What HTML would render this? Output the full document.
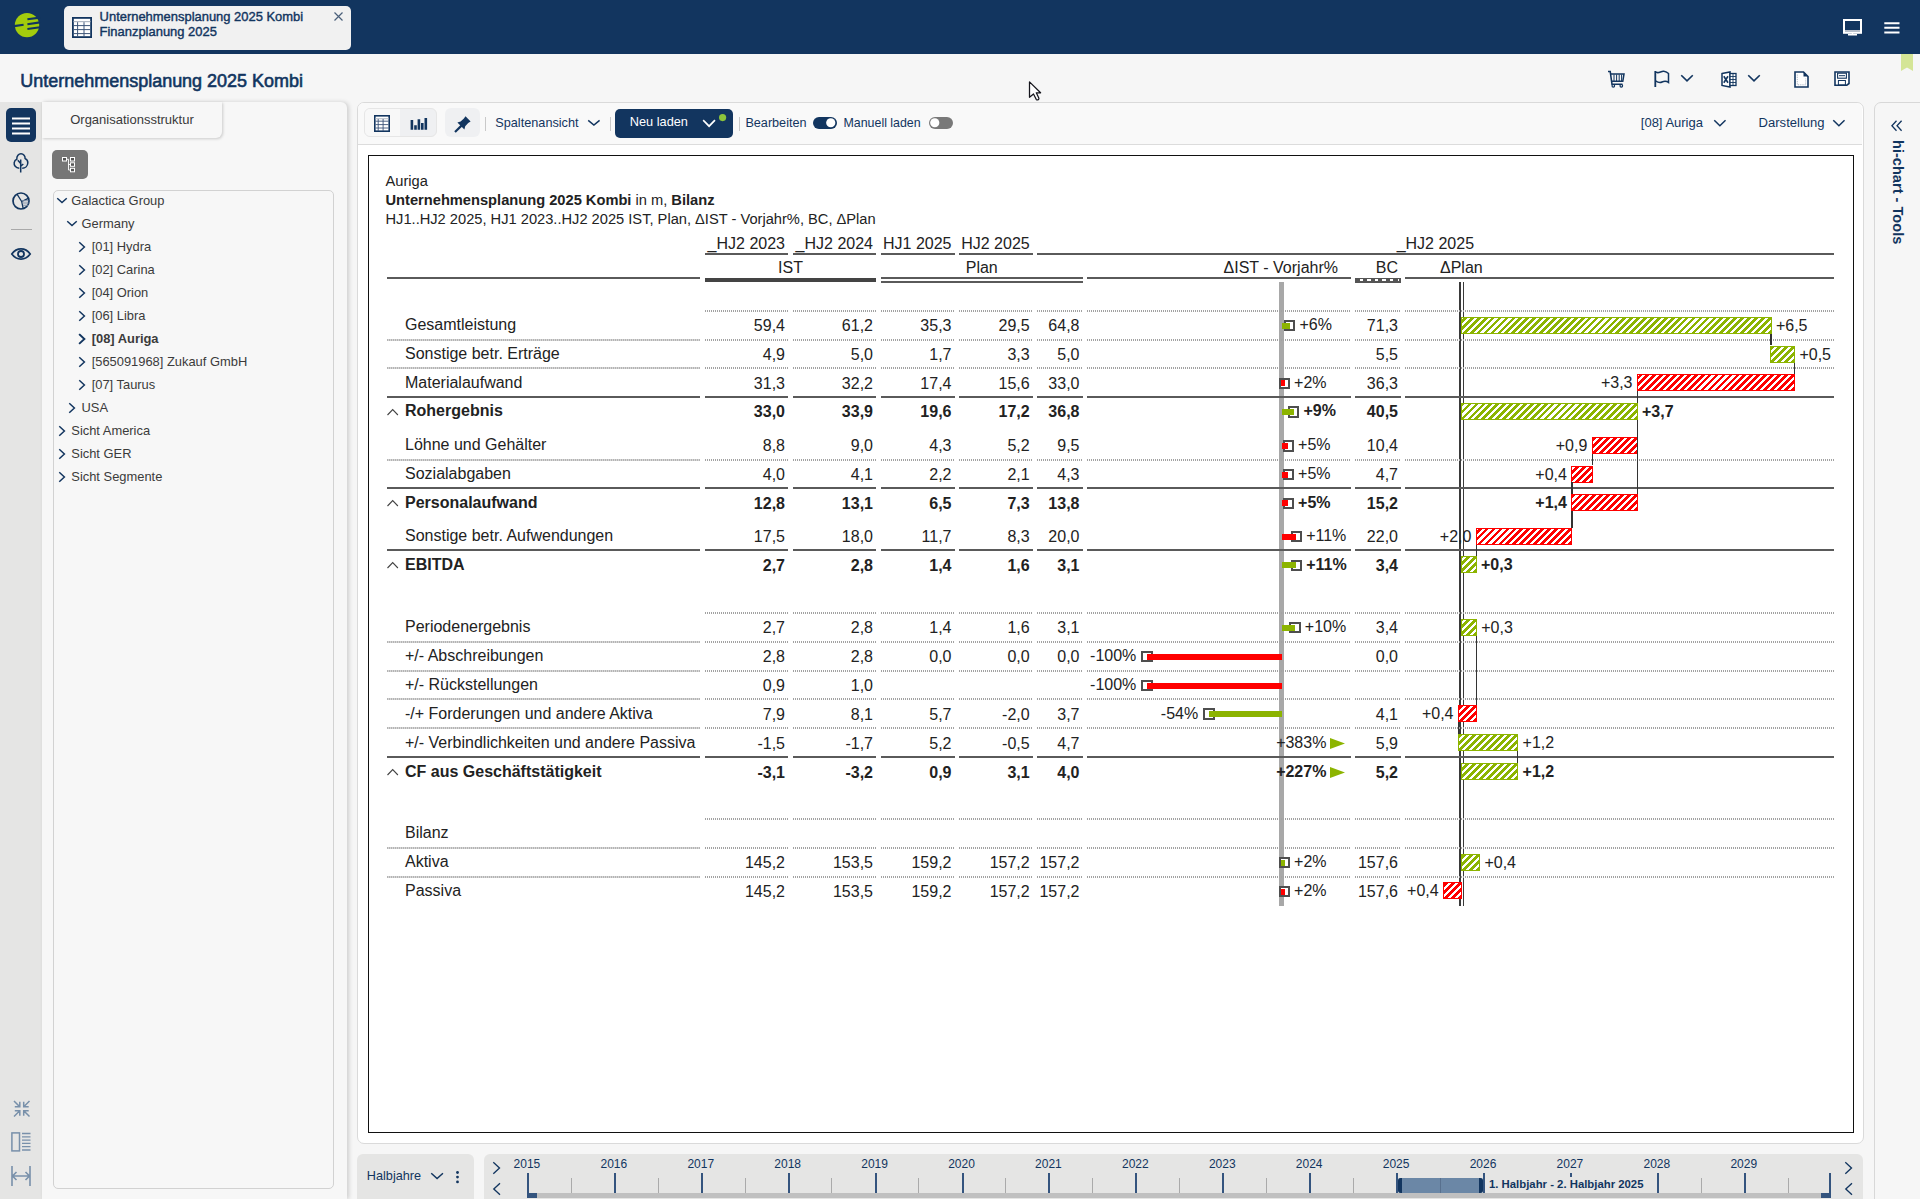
<!DOCTYPE html><html><head><meta charset="utf-8"><style>
*{margin:0;padding:0;box-sizing:border-box}
html,body{width:1920px;height:1199px;overflow:hidden;background:#f6f6f6;font-family:'Liberation Sans', sans-serif;position:relative}
svg{position:absolute;overflow:visible}
</style></head><body>
<div style="position:absolute;left:0px;top:0px;width:1920px;height:54px;background:#12355f;"></div>
<svg style="left:14px;top:12px;" width="26" height="26" viewBox="0 0 26 26"><circle cx="13" cy="13.1" r="12.2" fill="#a3cc0c"/><path d="M13.4 7.3 L26 5.6 M13.4 12.3 L26 10.4 M13.4 17.0 L26 15.2 M0 14.1 L9.6 12.8" stroke="#12355f" stroke-width="2.1" fill="none"/></svg>
<div style="position:absolute;left:64px;top:6px;width:287px;height:44px;background:#f1f1f1;border-radius:5px;"></div>
<svg style="left:72px;top:17px;" width="20" height="21" viewBox="0 0 20 21"><rect x="0.9" y="0.9" width="18.2" height="19.2" fill="#fff" stroke="#12355f" stroke-width="1.8"/><path d="M1.5 4.6 H18.5" stroke="#b0b8c4" stroke-width="1.2"/><path d="M1.5 8.6 H18.5 M1.5 12.6 H18.5 M1.5 16.6 H18.5 M5.6 5.2 V19.5 M12 5.2 V19.5" stroke="#3c5478" stroke-width="1"/></svg>
<div style="position:absolute;top:10.94px;font-size:12.95px;line-height:12.95px;font-weight:400;color:#12355f;white-space:nowrap;font-family:'Liberation Sans', sans-serif;-webkit-text-stroke:0.4px #12355f;left:99.6px;">Unternehmensplanung 2025 Kombi</div>
<div style="position:absolute;top:25.74px;font-size:12.95px;line-height:12.95px;font-weight:400;color:#12355f;white-space:nowrap;font-family:'Liberation Sans', sans-serif;-webkit-text-stroke:0.4px #12355f;left:99.6px;">Finanzplanung 2025</div>
<svg style="left:334px;top:11.5px;" width="9" height="9" viewBox="0 0 9 9"><path d="M0.5 0.5 L8.5 8.5 M8.5 0.5 L0.5 8.5" stroke="#4a5f7a" stroke-width="1.2"/></svg>
<svg style="left:1843px;top:19px;" width="19" height="17" viewBox="0 0 19 17"><rect x="1" y="1" width="17" height="12.8" fill="none" stroke="#fff" stroke-width="2"/><rect x="2" y="11" width="15" height="2" fill="#b8c0cc"/><path d="M9.5 13.8 V15.5 M5 15.8 H14" stroke="#fff" stroke-width="1.4"/></svg>
<svg style="left:1884px;top:21.5px;" width="16" height="12" viewBox="0 0 16 12"><path d="M0.3 1.3 H15.5 M0.3 5.7 H15.5 M0.3 10.4 H15.5" stroke="#fff" stroke-width="2"/></svg>
<div style="position:absolute;top:72.28px;font-size:17.98px;line-height:17.98px;font-weight:400;color:#12355f;white-space:nowrap;font-family:'Liberation Sans', sans-serif;-webkit-text-stroke:0.6px #12355f;left:20.3px;">Unternehmensplanung 2025 Kombi</div>
<svg style="left:1607px;top:70px;" width="18" height="18" viewBox="0 0 18 18"><path d="M1 1.5 H3.2 L5 14.3 H15.5" fill="none" stroke="#12355f" stroke-width="1.6"/><path d="M3.8 4 H17 L15.8 11.3 H4.8" fill="none" stroke="#12355f" stroke-width="1.5"/><path d="M7 4.5 V11 M9.6 4.5 V11 M12.2 4.5 V11 M14.6 4.5 V11" stroke="#12355f" stroke-width="1"/><circle cx="6.3" cy="15.8" r="1.3" fill="none" stroke="#12355f" stroke-width="1.2"/><circle cx="14.3" cy="15.8" r="1.3" fill="none" stroke="#12355f" stroke-width="1.2"/></svg>
<svg style="left:1654px;top:70px;" width="16" height="18" viewBox="0 0 16 18"><path d="M1.3 1 V17" stroke="#12355f" stroke-width="1.8"/><path d="M1.5 1.8 C4.5 4.5 7 0.5 10 1.2 C12 1.6 13.5 2.5 14.5 3.5 V12.5 C12 10.5 10 11 8 12 C6 13 4 12.5 1.5 10.8" fill="none" stroke="#12355f" stroke-width="1.5"/></svg>
<svg style="left:1681px;top:75.3px;" width="12" height="6.6" viewBox="0 0 12 6.6"><path d="M0.8 0.8 L6.0 5.8 L11.2 0.8" fill="none" stroke="#12355f" stroke-width="1.6" stroke-linecap="square" stroke-linejoin="miter"/></svg>
<svg style="left:1721px;top:70.5px;" width="16" height="17" viewBox="0 0 16 17"><path d="M1 2.5 L9 1 V16 L1 14.5 Z" fill="#fff" stroke="#12355f" stroke-width="1.5"/><rect x="9" y="2.5" width="6" height="12" fill="#fff" stroke="#12355f" stroke-width="1.3"/><path d="M9 5.5 H15 M9 8.5 H15 M9 11.5 H15 M12 2.5 V14.5" stroke="#12355f" stroke-width="0.9"/><path d="M2.8 5.3 L7 11.8 M7 5.3 L2.8 11.8" stroke="#12355f" stroke-width="1.6"/></svg>
<svg style="left:1748px;top:75.3px;" width="12" height="6.6" viewBox="0 0 12 6.6"><path d="M0.8 0.8 L6.0 5.8 L11.2 0.8" fill="none" stroke="#12355f" stroke-width="1.6" stroke-linecap="square" stroke-linejoin="miter"/></svg>
<svg style="left:1794px;top:70.5px;" width="15" height="17" viewBox="0 0 15 17"><path d="M1 1 H9.5 L14 5.5 V16 H1 Z" fill="#fff" stroke="#12355f" stroke-width="1.6"/><path d="M9.5 1 V5.5 H14 Z" fill="#12355f"/><path d="M3.3 3.5 V13.8 H11.7 V7.5" fill="none" stroke="#9aa6b6" stroke-width="0.8" stroke-dasharray="1.2 1"/></svg>
<svg style="left:1834px;top:71px;" width="16" height="15" viewBox="0 0 16 15"><path d="M1 1 H15 V12.5 L12.8 14.2 H1 Z" fill="#fff" stroke="#12355f" stroke-width="1.6"/><rect x="3.6" y="2.2" width="8.8" height="5" fill="none" stroke="#12355f" stroke-width="1.1"/><path d="M5 4.7 H11" stroke="#12355f" stroke-width="1"/><rect x="4.4" y="9.5" width="7" height="4.5" fill="none" stroke="#12355f" stroke-width="1"/></svg>
<svg style="left:1901px;top:54px;" width="12" height="17" viewBox="0 0 12 17"><path d="M0 0 H12 V17 L6 13.5 L0 17 Z" fill="#d4e596"/></svg>
<div style="position:absolute;left:0px;top:102px;width:42px;height:1097px;background:#e5e5e4;"></div>
<div style="position:absolute;left:6px;top:108px;width:30px;height:34px;background:#12355f;border-radius:5px;"></div>
<svg style="left:12px;top:116.5px;" width="18" height="18" viewBox="0 0 18 18"><path d="M0 1.4 H18 M0 6.4 H18 M0 11.4 H18 M0 16.4 H18" stroke="#fff" stroke-width="2"/></svg>
<svg style="left:13px;top:153px;" width="16" height="20" viewBox="0 0 16 20"><path d="M7.7 19.5 V6.5 M7.7 10.5 L4.8 7.2 M7.7 13.2 L10.3 11" fill="none" stroke="#12355f" stroke-width="1.5"/><path d="M6.3 15.2 C2.5 15 0.8 12 1.2 9.6 C1.5 7.6 2.8 6.5 3.8 6.2 C3.6 3 5.6 0.8 8 0.8 C10.5 0.8 12.3 3 12.1 5.6 C13.8 6.3 15 8 14.8 10 C14.6 12.8 12.3 15.2 9.2 15.2" fill="none" stroke="#12355f" stroke-width="1.5"/></svg>
<svg style="left:12px;top:192px;" width="18" height="18" viewBox="0 0 18 18"><circle cx="9" cy="9" r="8" fill="none" stroke="#12355f" stroke-width="1.7"/><path d="M5 2.1 L9.7 9.5 L16.2 6.3 M9.7 9.5 L11.2 16.6" fill="none" stroke="#12355f" stroke-width="1.3"/><path d="M10.5 11 H16.5 M11 13.3 H15.8 M10.3 8.8 L16.4 8.8" stroke="#8090a8" stroke-width="1.1"/></svg>
<div style="position:absolute;left:10.5px;top:229px;width:21px;height:1px;background:#a9a9a9;"></div>
<svg style="left:11px;top:248px;" width="20" height="12" viewBox="0 0 20 12"><path d="M0.8 6 C4 1.5 7 0.9 10 0.9 C13 0.9 16 1.5 19.2 6 C16 10.5 13 11.1 10 11.1 C7 11.1 4 10.5 0.8 6 Z" fill="none" stroke="#12355f" stroke-width="1.7"/><circle cx="10" cy="6" r="3" fill="none" stroke="#12355f" stroke-width="1.8"/></svg>
<svg style="left:12.5px;top:1100px;" width="17.5" height="17.5" viewBox="0 0 17.5 17.5"><path d="M1 1 L6.5 6.5 M1.8 6.8 H6.8 V1.8 M16.5 1 L11 6.5 M10.7 1.8 V6.8 H15.7 M1 16.5 L6.5 11 M1.8 10.7 H6.8 V15.7 M16.5 16.5 L11 11 M10.7 15.7 V10.7 H15.7" fill="none" stroke="#7890aa" stroke-width="1.5"/></svg>
<svg style="left:11px;top:1132px;" width="20" height="20" viewBox="0 0 20 20"><rect x="0.9" y="0.9" width="7.6" height="18" fill="none" stroke="#7890aa" stroke-width="1.5"/><path d="M11 1.5 H19.5 M11 4.8 H19.5 M11 8.1 H19.5 M11 11.4 H19.5 M11 14.7 H19.5 M11 18 H19.5" stroke="#7890aa" stroke-width="1.3"/></svg>
<svg style="left:11px;top:1166px;" width="20" height="20" viewBox="0 0 20 20"><path d="M1 0 V20 M19 0 V20 M1.5 10 H18.5 M5.5 6 L1.5 10 L5.5 14 M14.5 6 L18.5 10 L14.5 14" fill="none" stroke="#7890aa" stroke-width="1.6"/></svg>
<div style="position:absolute;left:42px;top:102px;width:305px;height:1097px;background:#f7f7f7;box-shadow:2px 0 4px rgba(0,0,0,0.16);border-top-right-radius:6px;"></div>
<div style="position:absolute;left:42px;top:102px;width:180px;height:36px;background:#f7f7f7;box-shadow:1px 1px 3px rgba(0,0,0,0.18);border-bottom-right-radius:6px;"></div>
<div style="position:absolute;top:112.80px;font-size:13px;line-height:13px;font-weight:400;color:#3a3a3a;white-space:nowrap;font-family:'Liberation Sans', sans-serif;left:70.2px;">Organisationsstruktur</div>
<div style="position:absolute;left:52px;top:150px;width:36px;height:29px;background:#767676;border-radius:5px;"></div>
<svg style="left:62px;top:157px;" width="14" height="16" viewBox="0 0 14 16"><rect x="0.5" y="0.5" width="4" height="3.5" fill="#555" stroke="#fff" stroke-width="1"/><rect x="8.5" y="0.5" width="4" height="3.5" fill="#555" stroke="#fff" stroke-width="1"/><rect x="8.5" y="5.8" width="4" height="3.5" fill="#555" stroke="#fff" stroke-width="1"/><rect x="8.5" y="11.3" width="4" height="3.5" fill="#555" stroke="#fff" stroke-width="1"/><path d="M4.5 2.3 H6.5 V13 H8.5 M6.5 7.5 H8.5" fill="none" stroke="#fff" stroke-width="0.9"/></svg>
<div style="position:absolute;left:53px;top:189.5px;width:281px;height:999px;border:1px solid #d2d2d2;border-radius:5px;"></div>
<svg style="left:57px;top:198px;" width="10" height="5.4" viewBox="0 0 10 5.4"><path d="M0.8 0.8 L5.0 4.6000000000000005 L9.2 0.8" fill="none" stroke="#12355f" stroke-width="1.5" stroke-linecap="square" stroke-linejoin="miter"/></svg>
<div style="position:absolute;top:194.88px;font-size:12.9px;line-height:12.9px;font-weight:400;color:#3b3b3b;white-space:nowrap;font-family:'Liberation Sans', sans-serif;left:71.3px;">Galactica Group</div>
<svg style="left:67px;top:221px;" width="10" height="5.4" viewBox="0 0 10 5.4"><path d="M0.8 0.8 L5.0 4.6000000000000005 L9.2 0.8" fill="none" stroke="#12355f" stroke-width="1.5" stroke-linecap="square" stroke-linejoin="miter"/></svg>
<div style="position:absolute;top:217.88px;font-size:12.9px;line-height:12.9px;font-weight:400;color:#3b3b3b;white-space:nowrap;font-family:'Liberation Sans', sans-serif;left:81.5px;">Germany</div>
<svg style="left:79px;top:242.3px;" width="6.2" height="10" viewBox="0 0 6.2 10"><path d="M0.8 0.8 L5.4 5.0 L0.8 9.2" fill="none" stroke="#12355f" stroke-width="1.5" stroke-linecap="square" stroke-linejoin="miter"/></svg>
<div style="position:absolute;top:240.88px;font-size:12.9px;line-height:12.9px;font-weight:400;color:#3b3b3b;white-space:nowrap;font-family:'Liberation Sans', sans-serif;left:91.69999999999999px;">[01] Hydra</div>
<svg style="left:79px;top:265.3px;" width="6.2" height="10" viewBox="0 0 6.2 10"><path d="M0.8 0.8 L5.4 5.0 L0.8 9.2" fill="none" stroke="#12355f" stroke-width="1.5" stroke-linecap="square" stroke-linejoin="miter"/></svg>
<div style="position:absolute;top:263.88px;font-size:12.9px;line-height:12.9px;font-weight:400;color:#3b3b3b;white-space:nowrap;font-family:'Liberation Sans', sans-serif;left:91.69999999999999px;">[02] Carina</div>
<svg style="left:79px;top:288.3px;" width="6.2" height="10" viewBox="0 0 6.2 10"><path d="M0.8 0.8 L5.4 5.0 L0.8 9.2" fill="none" stroke="#12355f" stroke-width="1.5" stroke-linecap="square" stroke-linejoin="miter"/></svg>
<div style="position:absolute;top:286.88px;font-size:12.9px;line-height:12.9px;font-weight:400;color:#3b3b3b;white-space:nowrap;font-family:'Liberation Sans', sans-serif;left:91.69999999999999px;">[04] Orion</div>
<svg style="left:79px;top:311.3px;" width="6.2" height="10" viewBox="0 0 6.2 10"><path d="M0.8 0.8 L5.4 5.0 L0.8 9.2" fill="none" stroke="#12355f" stroke-width="1.5" stroke-linecap="square" stroke-linejoin="miter"/></svg>
<div style="position:absolute;top:309.88px;font-size:12.9px;line-height:12.9px;font-weight:400;color:#3b3b3b;white-space:nowrap;font-family:'Liberation Sans', sans-serif;left:91.69999999999999px;">[06] Libra</div>
<svg style="left:79px;top:334.3px;" width="6.2" height="10" viewBox="0 0 6.2 10"><path d="M0.8 0.8 L5.4 5.0 L0.8 9.2" fill="none" stroke="#12355f" stroke-width="1.9" stroke-linecap="square" stroke-linejoin="miter"/></svg>
<div style="position:absolute;top:332.88px;font-size:12.9px;line-height:12.9px;font-weight:700;color:#3b3b3b;white-space:nowrap;font-family:'Liberation Sans', sans-serif;left:91.69999999999999px;">[08] Auriga</div>
<svg style="left:79px;top:357.3px;" width="6.2" height="10" viewBox="0 0 6.2 10"><path d="M0.8 0.8 L5.4 5.0 L0.8 9.2" fill="none" stroke="#12355f" stroke-width="1.5" stroke-linecap="square" stroke-linejoin="miter"/></svg>
<div style="position:absolute;top:355.88px;font-size:12.9px;line-height:12.9px;font-weight:400;color:#3b3b3b;white-space:nowrap;font-family:'Liberation Sans', sans-serif;left:91.69999999999999px;">[565091968] Zukauf GmbH</div>
<svg style="left:79px;top:380.3px;" width="6.2" height="10" viewBox="0 0 6.2 10"><path d="M0.8 0.8 L5.4 5.0 L0.8 9.2" fill="none" stroke="#12355f" stroke-width="1.5" stroke-linecap="square" stroke-linejoin="miter"/></svg>
<div style="position:absolute;top:378.88px;font-size:12.9px;line-height:12.9px;font-weight:400;color:#3b3b3b;white-space:nowrap;font-family:'Liberation Sans', sans-serif;left:91.69999999999999px;">[07] Taurus</div>
<svg style="left:69px;top:403.3px;" width="6.2" height="10" viewBox="0 0 6.2 10"><path d="M0.8 0.8 L5.4 5.0 L0.8 9.2" fill="none" stroke="#12355f" stroke-width="1.5" stroke-linecap="square" stroke-linejoin="miter"/></svg>
<div style="position:absolute;top:401.88px;font-size:12.9px;line-height:12.9px;font-weight:400;color:#3b3b3b;white-space:nowrap;font-family:'Liberation Sans', sans-serif;left:81.5px;">USA</div>
<svg style="left:59px;top:426.3px;" width="6.2" height="10" viewBox="0 0 6.2 10"><path d="M0.8 0.8 L5.4 5.0 L0.8 9.2" fill="none" stroke="#12355f" stroke-width="1.5" stroke-linecap="square" stroke-linejoin="miter"/></svg>
<div style="position:absolute;top:424.88px;font-size:12.9px;line-height:12.9px;font-weight:400;color:#3b3b3b;white-space:nowrap;font-family:'Liberation Sans', sans-serif;left:71.3px;">Sicht America</div>
<svg style="left:59px;top:449.3px;" width="6.2" height="10" viewBox="0 0 6.2 10"><path d="M0.8 0.8 L5.4 5.0 L0.8 9.2" fill="none" stroke="#12355f" stroke-width="1.5" stroke-linecap="square" stroke-linejoin="miter"/></svg>
<div style="position:absolute;top:447.88px;font-size:12.9px;line-height:12.9px;font-weight:400;color:#3b3b3b;white-space:nowrap;font-family:'Liberation Sans', sans-serif;left:71.3px;">Sicht GER</div>
<svg style="left:59px;top:472.3px;" width="6.2" height="10" viewBox="0 0 6.2 10"><path d="M0.8 0.8 L5.4 5.0 L0.8 9.2" fill="none" stroke="#12355f" stroke-width="1.5" stroke-linecap="square" stroke-linejoin="miter"/></svg>
<div style="position:absolute;top:470.88px;font-size:12.9px;line-height:12.9px;font-weight:400;color:#3b3b3b;white-space:nowrap;font-family:'Liberation Sans', sans-serif;left:71.3px;">Sicht Segmente</div>
<div style="position:absolute;left:357px;top:102px;width:1507px;height:1042px;background:#fff;border:1px solid #dadada;border-radius:7px;overflow:hidden;"></div>
<div style="position:absolute;left:358px;top:103px;width:1504px;height:42px;background:#f9f9f9;border-bottom:1px solid #dcdcdc;border-radius:6px 6px 0 0;"></div>
<div style="position:absolute;left:363.5px;top:108.3px;width:73px;height:29px;background:#eff0f2;border:1px solid #e6e6e6;border-radius:6px;"></div>
<div style="position:absolute;left:364.5px;top:109.3px;width:35px;height:27px;background:#f8f8f8;border-radius:5px 0 0 5px;"></div>
<svg style="left:374px;top:115px;" width="16" height="17" viewBox="0 0 16 17"><rect x="0.8" y="0.8" width="14.4" height="15.4" fill="#fff" stroke="#12355f" stroke-width="1.6"/><path d="M1.5 3.7 H14.5" stroke="#b8bec8" stroke-width="1.1"/><path d="M1.5 6.2 H14.5 M1.5 9.6 H14.5 M1.5 13 H14.5 M4.2 4 V16 M9.1 4 V16" stroke="#3c5478" stroke-width="0.9"/></svg>
<svg style="left:409.5px;top:117px;" width="17" height="13" viewBox="0 0 17 13"><path d="M1.9 3 V12.7 M5.5 8.3 V12.7 M8.9 2.3 V12.7 M12.3 6.1 V12.7 M15.8 0.9 V12.7" stroke="#12355f" stroke-width="2.6"/></svg>
<div style="position:absolute;left:444.5px;top:108.3px;width:35.5px;height:29px;background:#eff0f2;border-radius:6px;"></div>
<svg style="left:453.5px;top:115.5px;" width="17" height="17" viewBox="0 0 17 17"><path d="M11.5 0.3 L16.6 5.4 L14.2 7 L11.2 10.3 L10.4 13.4 L3.4 6.4 L6.6 5.6 L9.9 2.6 Z" fill="#12355f"/><path d="M7.5 9.6 L1 16" stroke="#12355f" stroke-width="2.2"/></svg>
<div style="position:absolute;left:485px;top:117px;width:1px;height:13.5px;background:#c9c9c9;"></div>
<div style="position:absolute;top:116.65px;font-size:12.7px;line-height:12.7px;font-weight:400;color:#12355f;white-space:nowrap;font-family:'Liberation Sans', sans-serif;left:495.3px;">Spaltenansicht</div>
<svg style="left:588.3px;top:120px;" width="11.8" height="5.8" viewBox="0 0 11.8 5.8"><path d="M0.8 0.8 L5.9 5.0 L11.0 0.8" fill="none" stroke="#12355f" stroke-width="1.5" stroke-linecap="square" stroke-linejoin="miter"/></svg>
<div style="position:absolute;left:609.5px;top:117px;width:1px;height:13.5px;background:#c9c9c9;"></div>
<div style="position:absolute;left:615.3px;top:109px;width:117.5px;height:28.5px;background:#12355f;border-radius:5px;"></div>
<div style="position:absolute;top:116.41px;font-size:12.75px;line-height:12.75px;font-weight:400;color:#fff;white-space:nowrap;font-family:'Liberation Sans', sans-serif;left:629.8px;">Neu laden</div>
<svg style="left:702.8px;top:120.3px;" width="12.2" height="7" viewBox="0 0 12.2 7"><path d="M0.8 0.8 L6.1 6.2 L11.399999999999999 0.8" fill="none" stroke="#fff" stroke-width="1.7" stroke-linecap="square" stroke-linejoin="miter"/></svg>
<svg style="left:719.3px;top:114.2px;" width="7.2" height="7.2" viewBox="0 0 7.2 7.2"><circle cx="3.6" cy="3.6" r="3.6" fill="#8cc43c"/></svg>
<div style="position:absolute;left:739px;top:117px;width:1px;height:13.5px;background:#c9c9c9;"></div>
<div style="position:absolute;top:117.19px;font-size:12.65px;line-height:12.65px;font-weight:400;color:#12355f;white-space:nowrap;font-family:'Liberation Sans', sans-serif;left:745.4px;">Bearbeiten</div>
<div style="position:absolute;left:812.9px;top:116.9px;width:24px;height:12.2px;background:#12355f;border-radius:6.1px;"></div>
<svg style="left:825.5px;top:118.3px;" width="9.5" height="9.5" viewBox="0 0 9.5 9.5"><circle cx="4.75" cy="4.75" r="4.6" fill="#fff"/></svg>
<div style="position:absolute;top:116.70px;font-size:12.4px;line-height:12.4px;font-weight:400;color:#12355f;white-space:nowrap;font-family:'Liberation Sans', sans-serif;left:843.5px;">Manuell laden</div>
<div style="position:absolute;left:928.8px;top:116.9px;width:24px;height:12.2px;background:#797979;border-radius:6.1px;"></div>
<svg style="left:930.3px;top:118.3px;" width="9.5" height="9.5" viewBox="0 0 9.5 9.5"><circle cx="4.75" cy="4.75" r="4.6" fill="#fff"/></svg>
<div style="position:absolute;top:115.80px;font-size:13px;line-height:13px;font-weight:400;color:#12355f;white-space:nowrap;font-family:'Liberation Sans', sans-serif;left:1640.8px;">[08] Auriga</div>
<svg style="left:1714.3px;top:120.4px;" width="11.8" height="6.5" viewBox="0 0 11.8 6.5"><path d="M0.8 0.8 L5.9 5.7 L11.0 0.8" fill="none" stroke="#12355f" stroke-width="1.5" stroke-linecap="square" stroke-linejoin="miter"/></svg>
<div style="position:absolute;top:115.75px;font-size:13.05px;line-height:13.05px;font-weight:400;color:#12355f;white-space:nowrap;font-family:'Liberation Sans', sans-serif;left:1758.6px;">Darstellung</div>
<svg style="left:1832.7px;top:120.4px;" width="11.8" height="6.5" viewBox="0 0 11.8 6.5"><path d="M0.8 0.8 L5.9 5.7 L11.0 0.8" fill="none" stroke="#12355f" stroke-width="1.5" stroke-linecap="square" stroke-linejoin="miter"/></svg>
<div style="position:absolute;left:368px;top:155px;width:1486px;height:978px;border:1.5px solid #111;background:#fff;"></div>
<div style="position:absolute;left:1874px;top:102px;width:60px;height:1120px;background:#f6f6f6;border:1px solid #d8d8d8;border-radius:7px;"></div>
<svg style="left:1891.3px;top:120.4px;" width="11.5" height="11.5" viewBox="0 0 11.5 11.5"><path d="M5.5 0.7 L0.9 5.75 L5.5 10.8 M10.6 0.7 L6 5.75 L10.6 10.8" fill="none" stroke="#12355f" stroke-width="1.3"/></svg>
<div style="position:absolute;left:1904.7px;top:140.3px;transform-origin:0 0;transform:rotate(90deg);font-family:'Liberation Sans', sans-serif;font-size:14.6px;line-height:14px;font-weight:700;color:#12355f;white-space:nowrap">hi-chart - Tools</div>
<div style="position:absolute;left:357.3px;top:1154px;width:116.5px;height:60px;background:#e5e5e4;border-radius:6px;"></div>
<div style="position:absolute;top:1170.15px;font-size:12.7px;line-height:12.7px;font-weight:400;color:#12355f;white-space:nowrap;font-family:'Liberation Sans', sans-serif;left:366.8px;">Halbjahre</div>
<svg style="left:430.8px;top:1172.5px;" width="12.2" height="6.3" viewBox="0 0 12.2 6.3"><path d="M0.8 0.8 L6.1 5.5 L11.399999999999999 0.8" fill="none" stroke="#12355f" stroke-width="1.5" stroke-linecap="square" stroke-linejoin="miter"/></svg>
<svg style="left:456.4px;top:1171px;" width="3" height="12.5" viewBox="0 0 3 12.5"><circle cx="1.5" cy="1.5" r="1.4" fill="#12355f"/><circle cx="1.5" cy="6.1" r="1.4" fill="#12355f"/><circle cx="1.5" cy="10.9" r="1.4" fill="#12355f"/></svg>
<div style="position:absolute;left:484.2px;top:1154px;width:1379.3px;height:60px;background:#e5e5e4;border-radius:6px;"></div>
<svg style="left:493.3px;top:1161.8px;" width="7.3" height="12.2" viewBox="0 0 7.3 12.2"><path d="M0.8 0.8 L6.5 6.1 L0.8 11.399999999999999" fill="none" stroke="#12355f" stroke-width="1.35" stroke-linecap="square" stroke-linejoin="miter"/></svg>
<svg style="left:493.3px;top:1183px;" width="7.3" height="12.2" viewBox="0 0 7.3 12.2"><path d="M6.5 0.8 L0.8 6.1 L6.5 11.399999999999999" fill="none" stroke="#12355f" stroke-width="1.35" stroke-linecap="square" stroke-linejoin="miter"/></svg>
<svg style="left:1845px;top:1161.8px;" width="7.3" height="12.2" viewBox="0 0 7.3 12.2"><path d="M0.8 0.8 L6.5 6.1 L0.8 11.399999999999999" fill="none" stroke="#12355f" stroke-width="1.35" stroke-linecap="square" stroke-linejoin="miter"/></svg>
<svg style="left:1845px;top:1183px;" width="7.3" height="12.2" viewBox="0 0 7.3 12.2"><path d="M6.5 0.8 L0.8 6.1 L6.5 11.399999999999999" fill="none" stroke="#12355f" stroke-width="1.35" stroke-linecap="square" stroke-linejoin="miter"/></svg>
<div style="position:absolute;left:537px;top:1193px;width:1293px;height:5px;background:#c0c0c0;"></div>
<div style="position:absolute;top:1157.74px;font-size:12px;line-height:12px;font-weight:400;color:#12355f;white-space:nowrap;font-family:'Liberation Sans', sans-serif;left:226.89999999999998px;width:600px;text-align:center;">2015</div>
<div style="position:absolute;left:526.9px;top:1173.2px;width:2px;height:19.8px;background:#34547e;"></div>
<div style="position:absolute;left:570.6999999999999px;top:1178px;width:1px;height:14.6px;background:#aaaaaa;"></div>
<div style="position:absolute;top:1157.74px;font-size:12px;line-height:12px;font-weight:400;color:#12355f;white-space:nowrap;font-family:'Liberation Sans', sans-serif;left:313.81999999999994px;width:600px;text-align:center;">2016</div>
<div style="position:absolute;left:613.8199999999999px;top:1173.2px;width:2px;height:19.8px;background:#34547e;"></div>
<div style="position:absolute;left:657.6199999999999px;top:1178px;width:1px;height:14.6px;background:#aaaaaa;"></div>
<div style="position:absolute;top:1157.74px;font-size:12px;line-height:12px;font-weight:400;color:#12355f;white-space:nowrap;font-family:'Liberation Sans', sans-serif;left:400.74px;width:600px;text-align:center;">2017</div>
<div style="position:absolute;left:700.74px;top:1173.2px;width:2px;height:19.8px;background:#34547e;"></div>
<div style="position:absolute;left:744.54px;top:1178px;width:1px;height:14.6px;background:#aaaaaa;"></div>
<div style="position:absolute;top:1157.74px;font-size:12px;line-height:12px;font-weight:400;color:#12355f;white-space:nowrap;font-family:'Liberation Sans', sans-serif;left:487.65999999999997px;width:600px;text-align:center;">2018</div>
<div style="position:absolute;left:787.66px;top:1173.2px;width:2px;height:19.8px;background:#34547e;"></div>
<div style="position:absolute;left:831.4599999999999px;top:1178px;width:1px;height:14.6px;background:#aaaaaa;"></div>
<div style="position:absolute;top:1157.74px;font-size:12px;line-height:12px;font-weight:400;color:#12355f;white-space:nowrap;font-family:'Liberation Sans', sans-serif;left:574.5799999999999px;width:600px;text-align:center;">2019</div>
<div style="position:absolute;left:874.5799999999999px;top:1173.2px;width:2px;height:19.8px;background:#34547e;"></div>
<div style="position:absolute;left:918.3799999999999px;top:1178px;width:1px;height:14.6px;background:#aaaaaa;"></div>
<div style="position:absolute;top:1157.74px;font-size:12px;line-height:12px;font-weight:400;color:#12355f;white-space:nowrap;font-family:'Liberation Sans', sans-serif;left:661.5px;width:600px;text-align:center;">2020</div>
<div style="position:absolute;left:961.5px;top:1173.2px;width:2px;height:19.8px;background:#34547e;"></div>
<div style="position:absolute;left:1005.3px;top:1178px;width:1px;height:14.6px;background:#aaaaaa;"></div>
<div style="position:absolute;top:1157.74px;font-size:12px;line-height:12px;font-weight:400;color:#12355f;white-space:nowrap;font-family:'Liberation Sans', sans-serif;left:748.4200000000001px;width:600px;text-align:center;">2021</div>
<div style="position:absolute;left:1048.42px;top:1173.2px;width:2px;height:19.8px;background:#34547e;"></div>
<div style="position:absolute;left:1092.22px;top:1178px;width:1px;height:14.6px;background:#aaaaaa;"></div>
<div style="position:absolute;top:1157.74px;font-size:12px;line-height:12px;font-weight:400;color:#12355f;white-space:nowrap;font-family:'Liberation Sans', sans-serif;left:835.3400000000001px;width:600px;text-align:center;">2022</div>
<div style="position:absolute;left:1135.3400000000001px;top:1173.2px;width:2px;height:19.8px;background:#34547e;"></div>
<div style="position:absolute;left:1179.14px;top:1178px;width:1px;height:14.6px;background:#aaaaaa;"></div>
<div style="position:absolute;top:1157.74px;font-size:12px;line-height:12px;font-weight:400;color:#12355f;white-space:nowrap;font-family:'Liberation Sans', sans-serif;left:922.26px;width:600px;text-align:center;">2023</div>
<div style="position:absolute;left:1222.26px;top:1173.2px;width:2px;height:19.8px;background:#34547e;"></div>
<div style="position:absolute;left:1266.06px;top:1178px;width:1px;height:14.6px;background:#aaaaaa;"></div>
<div style="position:absolute;top:1157.74px;font-size:12px;line-height:12px;font-weight:400;color:#12355f;white-space:nowrap;font-family:'Liberation Sans', sans-serif;left:1009.1799999999998px;width:600px;text-align:center;">2024</div>
<div style="position:absolute;left:1309.1799999999998px;top:1173.2px;width:2px;height:19.8px;background:#34547e;"></div>
<div style="position:absolute;left:1352.9799999999998px;top:1178px;width:1px;height:14.6px;background:#aaaaaa;"></div>
<div style="position:absolute;top:1157.74px;font-size:12px;line-height:12px;font-weight:400;color:#12355f;white-space:nowrap;font-family:'Liberation Sans', sans-serif;left:1096.1px;width:600px;text-align:center;">2025</div>
<div style="position:absolute;left:1396.1px;top:1173.2px;width:2px;height:19.8px;background:#34547e;"></div>
<div style="position:absolute;left:1439.8999999999999px;top:1178px;width:1px;height:14.6px;background:#aaaaaa;"></div>
<div style="position:absolute;top:1157.74px;font-size:12px;line-height:12px;font-weight:400;color:#12355f;white-space:nowrap;font-family:'Liberation Sans', sans-serif;left:1183.02px;width:600px;text-align:center;">2026</div>
<div style="position:absolute;left:1483.02px;top:1173.2px;width:2px;height:19.8px;background:#34547e;"></div>
<div style="position:absolute;left:1526.82px;top:1178px;width:1px;height:14.6px;background:#aaaaaa;"></div>
<div style="position:absolute;top:1157.74px;font-size:12px;line-height:12px;font-weight:400;color:#12355f;white-space:nowrap;font-family:'Liberation Sans', sans-serif;left:1269.94px;width:600px;text-align:center;">2027</div>
<div style="position:absolute;left:1569.94px;top:1173.2px;width:2px;height:19.8px;background:#34547e;"></div>
<div style="position:absolute;left:1613.74px;top:1178px;width:1px;height:14.6px;background:#aaaaaa;"></div>
<div style="position:absolute;top:1157.74px;font-size:12px;line-height:12px;font-weight:400;color:#12355f;white-space:nowrap;font-family:'Liberation Sans', sans-serif;left:1356.8600000000001px;width:600px;text-align:center;">2028</div>
<div style="position:absolute;left:1656.8600000000001px;top:1173.2px;width:2px;height:19.8px;background:#34547e;"></div>
<div style="position:absolute;left:1700.66px;top:1178px;width:1px;height:14.6px;background:#aaaaaa;"></div>
<div style="position:absolute;top:1157.74px;font-size:12px;line-height:12px;font-weight:400;color:#12355f;white-space:nowrap;font-family:'Liberation Sans', sans-serif;left:1443.7800000000002px;width:600px;text-align:center;">2029</div>
<div style="position:absolute;left:1743.7800000000002px;top:1173.2px;width:2px;height:19.8px;background:#34547e;"></div>
<div style="position:absolute;left:1787.5800000000002px;top:1178px;width:1px;height:14.6px;background:#aaaaaa;"></div>
<div style="position:absolute;left:527px;top:1193px;width:10px;height:4.5px;background:#34547e;"></div>
<div style="position:absolute;left:1829px;top:1173.2px;width:2px;height:24.3px;background:#34547e;"></div>
<div style="position:absolute;left:1821px;top:1193px;width:10px;height:4.5px;background:#34547e;"></div>
<div style="position:absolute;left:1398px;top:1178px;width:85.3px;height:14.8px;background:#6b87a6;border-radius:2px;"></div>
<div style="position:absolute;left:1440.3px;top:1178px;width:0.8px;height:14.8px;background:#58708e;"></div>
<div style="position:absolute;left:1398px;top:1178px;width:4px;height:14.8px;background:#12355f;border-radius:3px 0 0 3px;"></div>
<div style="position:absolute;left:1479.3px;top:1178px;width:4px;height:14.8px;background:#12355f;border-radius:0 3px 3px 0;"></div>
<div style="position:absolute;left:1486px;top:1176px;width:160px;height:17px;background:#e5e5e4;"></div>
<div style="position:absolute;left:1570.3px;top:1173.2px;width:2px;height:4px;background:#34547e;"></div>
<div style="position:absolute;left:1656.6px;top:1173.2px;width:2px;height:19.8px;background:#34547e;"></div>
<div style="position:absolute;top:1179.09px;font-size:11.35px;line-height:11.35px;font-weight:700;color:#12355f;white-space:nowrap;font-family:'Liberation Sans', sans-serif;left:1489px;">1. Halbjahr - 2. Halbjahr 2025</div>
<svg style="left:1027px;top:79px;" width="16" height="24" viewBox="0 0 16 24"><path d="M2.5 2.9 V18.3 L6.5 15 L9.2 20.3 Q10 21.3 11.3 20.7 Q12.3 20 11.8 19 L9.3 13.8 H13.6 Z" fill="#fff" stroke="#15151c" stroke-width="1.25" stroke-linejoin="round"/></svg>
<div style="position:absolute;top:174.48px;font-size:14.67px;line-height:14.67px;font-weight:400;color:#222;white-space:nowrap;font-family:'Liberation Sans', sans-serif;left:385.5px;">Auriga</div>
<div style="position:absolute;top:193.38px;font-size:14.67px;line-height:14.67px;font-weight:400;color:#222;white-space:nowrap;font-family:'Liberation Sans', sans-serif;left:385.5px;"><b>Unternehmensplanung 2025 Kombi</b> in m, <b>Bilanz</b></div>
<div style="position:absolute;top:212.38px;font-size:14.67px;line-height:14.67px;font-weight:400;color:#222;white-space:nowrap;font-family:'Liberation Sans', sans-serif;left:385.5px;">HJ1..HJ2 2025, HJ1 2023..HJ2 2025 IST, Plan, ΔIST - Vorjahr%, BC, ΔPlan</div>
<div style="position:absolute;top:236.46px;font-size:16px;line-height:16px;font-weight:400;color:#222;white-space:nowrap;font-family:'Liberation Sans', sans-serif;left:185px;width:600px;text-align:right;">_HJ2 2023</div>
<div style="position:absolute;left:705px;top:253.0px;width:83px;height:2px;background:#5a5a5a;"></div>
<div style="position:absolute;top:236.46px;font-size:16px;line-height:16px;font-weight:400;color:#222;white-space:nowrap;font-family:'Liberation Sans', sans-serif;left:273px;width:600px;text-align:right;">_HJ2 2024</div>
<div style="position:absolute;left:793px;top:253.0px;width:83px;height:2px;background:#5a5a5a;"></div>
<div style="position:absolute;top:236.46px;font-size:16px;line-height:16px;font-weight:400;color:#222;white-space:nowrap;font-family:'Liberation Sans', sans-serif;left:351.5px;width:600px;text-align:right;">HJ1 2025</div>
<div style="position:absolute;left:881px;top:253.0px;width:73.5px;height:2px;background:#5a5a5a;"></div>
<div style="position:absolute;top:236.46px;font-size:16px;line-height:16px;font-weight:400;color:#222;white-space:nowrap;font-family:'Liberation Sans', sans-serif;left:429.70000000000005px;width:600px;text-align:right;">HJ2 2025</div>
<div style="position:absolute;left:959px;top:253.0px;width:73.70000000000005px;height:2px;background:#5a5a5a;"></div>
<div style="position:absolute;top:236.46px;font-size:16px;line-height:16px;font-weight:400;color:#222;white-space:nowrap;font-family:'Liberation Sans', sans-serif;left:1135.35px;width:600px;text-align:center;">_HJ2 2025</div>
<div style="position:absolute;left:1037px;top:253.0px;width:796.7px;height:2px;background:#5a5a5a;"></div>
<div style="position:absolute;top:260.46px;font-size:16px;line-height:16px;font-weight:400;color:#222;white-space:nowrap;font-family:'Liberation Sans', sans-serif;left:490.5px;width:600px;text-align:center;">IST</div>
<div style="position:absolute;left:705px;top:277.5px;width:171px;height:4.5px;background:#444;"></div>
<div style="position:absolute;top:260.46px;font-size:16px;line-height:16px;font-weight:400;color:#222;white-space:nowrap;font-family:'Liberation Sans', sans-serif;left:681.75px;width:600px;text-align:center;">Plan</div>
<div style="position:absolute;left:881px;top:277.25px;width:201.5px;height:1.5px;background:#5a5a5a;"></div>
<div style="position:absolute;left:881px;top:281.05px;width:201.5px;height:1.5px;background:#5a5a5a;"></div>
<div style="position:absolute;left:387px;top:277.0px;width:313px;height:2px;background:#5a5a5a;"></div>
<div style="position:absolute;top:260.46px;font-size:16px;line-height:16px;font-weight:400;color:#222;white-space:nowrap;font-family:'Liberation Sans', sans-serif;left:738px;width:600px;text-align:right;">ΔIST - Vorjahr%</div>
<div style="position:absolute;left:1087px;top:277.0px;width:263.5px;height:2px;background:#5a5a5a;"></div>
<div style="position:absolute;top:260.46px;font-size:16px;line-height:16px;font-weight:400;color:#222;white-space:nowrap;font-family:'Liberation Sans', sans-serif;left:798px;width:600px;text-align:right;">BC</div>
<div style="position:absolute;left:1355px;top:277.5px;width:45.7px;height:5px;background:#555;"></div>
<div style="position:absolute;left:1357px;top:279.3px;width:42px;height:1.4px;background:repeating-linear-gradient(90deg,transparent 0 2.5px,#fff 2.5px 6px,transparent 6px 7.6px);"></div>
<div style="position:absolute;top:260.46px;font-size:16px;line-height:16px;font-weight:400;color:#222;white-space:nowrap;font-family:'Liberation Sans', sans-serif;left:1440px;">ΔPlan</div>
<div style="position:absolute;left:1405px;top:277.0px;width:428.70000000000005px;height:2px;background:#5a5a5a;"></div>
<div style="position:absolute;left:1279.3px;top:282px;width:4.6px;height:623.5px;background:#a8a8a8;"></div>
<div style="position:absolute;left:1459.4px;top:282px;width:1.6px;height:623.5px;background:#3a3a3a;"></div>
<div style="position:absolute;left:1462.6px;top:282px;width:1.6px;height:623.5px;background:#3a3a3a;"></div>
<div style="position:absolute;left:705px;top:309.5px;width:83px;height:2px;background:repeating-linear-gradient(90deg,#a2a2a2 0 1px,transparent 1px 2px);"></div>
<div style="position:absolute;left:793px;top:309.5px;width:83px;height:2px;background:repeating-linear-gradient(90deg,#a2a2a2 0 1px,transparent 1px 2px);"></div>
<div style="position:absolute;left:881px;top:309.5px;width:73.5px;height:2px;background:repeating-linear-gradient(90deg,#a2a2a2 0 1px,transparent 1px 2px);"></div>
<div style="position:absolute;left:959px;top:309.5px;width:73.70000000000005px;height:2px;background:repeating-linear-gradient(90deg,#a2a2a2 0 1px,transparent 1px 2px);"></div>
<div style="position:absolute;left:1037px;top:309.5px;width:45.5px;height:2px;background:repeating-linear-gradient(90deg,#a2a2a2 0 1px,transparent 1px 2px);"></div>
<div style="position:absolute;left:1087px;top:309.5px;width:263.5px;height:2px;background:repeating-linear-gradient(90deg,#a2a2a2 0 1px,transparent 1px 2px);"></div>
<div style="position:absolute;left:1355px;top:309.5px;width:45.700000000000045px;height:2px;background:repeating-linear-gradient(90deg,#a2a2a2 0 1px,transparent 1px 2px);"></div>
<div style="position:absolute;left:1405px;top:309.5px;width:428.70000000000005px;height:2px;background:repeating-linear-gradient(90deg,#a2a2a2 0 1px,transparent 1px 2px);"></div>
<div style="position:absolute;top:316.96px;font-size:16px;line-height:16px;font-weight:400;color:#222;white-space:nowrap;font-family:'Liberation Sans', sans-serif;left:405px;">Gesamtleistung</div>
<div style="position:absolute;top:317.96px;font-size:16px;line-height:16px;font-weight:400;color:#222;white-space:nowrap;font-family:'Liberation Sans', sans-serif;left:185px;width:600px;text-align:right;">59,4</div>
<div style="position:absolute;top:317.96px;font-size:16px;line-height:16px;font-weight:400;color:#222;white-space:nowrap;font-family:'Liberation Sans', sans-serif;left:273px;width:600px;text-align:right;">61,2</div>
<div style="position:absolute;top:317.96px;font-size:16px;line-height:16px;font-weight:400;color:#222;white-space:nowrap;font-family:'Liberation Sans', sans-serif;left:351.5px;width:600px;text-align:right;">35,3</div>
<div style="position:absolute;top:317.96px;font-size:16px;line-height:16px;font-weight:400;color:#222;white-space:nowrap;font-family:'Liberation Sans', sans-serif;left:429.70000000000005px;width:600px;text-align:right;">29,5</div>
<div style="position:absolute;top:317.96px;font-size:16px;line-height:16px;font-weight:400;color:#222;white-space:nowrap;font-family:'Liberation Sans', sans-serif;left:479.5px;width:600px;text-align:right;">64,8</div>
<div style="position:absolute;top:317.96px;font-size:16px;line-height:16px;font-weight:400;color:#222;white-space:nowrap;font-family:'Liberation Sans', sans-serif;left:798px;width:600px;text-align:right;">71,3</div>
<div style="position:absolute;left:387px;top:338.5px;width:313px;height:2px;background:repeating-linear-gradient(90deg,#b4b4b4 0 1px,#d6d6d6 1px 2px);"></div>
<div style="position:absolute;left:705px;top:338.5px;width:83px;height:2px;background:repeating-linear-gradient(90deg,#a2a2a2 0 1px,transparent 1px 2px);"></div>
<div style="position:absolute;left:793px;top:338.5px;width:83px;height:2px;background:repeating-linear-gradient(90deg,#a2a2a2 0 1px,transparent 1px 2px);"></div>
<div style="position:absolute;left:881px;top:338.5px;width:73.5px;height:2px;background:repeating-linear-gradient(90deg,#a2a2a2 0 1px,transparent 1px 2px);"></div>
<div style="position:absolute;left:959px;top:338.5px;width:73.70000000000005px;height:2px;background:repeating-linear-gradient(90deg,#a2a2a2 0 1px,transparent 1px 2px);"></div>
<div style="position:absolute;left:1037px;top:338.5px;width:45.5px;height:2px;background:repeating-linear-gradient(90deg,#a2a2a2 0 1px,transparent 1px 2px);"></div>
<div style="position:absolute;left:1087px;top:338.5px;width:263.5px;height:2px;background:repeating-linear-gradient(90deg,#a2a2a2 0 1px,transparent 1px 2px);"></div>
<div style="position:absolute;left:1355px;top:338.5px;width:45.700000000000045px;height:2px;background:repeating-linear-gradient(90deg,#a2a2a2 0 1px,transparent 1px 2px);"></div>
<div style="position:absolute;left:1405px;top:338.5px;width:428.70000000000005px;height:2px;background:repeating-linear-gradient(90deg,#a2a2a2 0 1px,transparent 1px 2px);"></div>
<div style="position:absolute;left:1283.9199999999998px;top:319.75px;width:11.5px;height:11.5px;background:#fff;border:2px solid #4e4e4e;box-sizing:border-box;"></div>
<div style="position:absolute;left:1281.6px;top:322.5px;width:8.069999999999936px;height:6px;background:#8cb400;"></div>
<div style="position:absolute;top:316.96px;font-size:16px;line-height:16px;font-weight:400;color:#222;white-space:nowrap;font-family:'Liberation Sans', sans-serif;left:1299.4199999999998px;">+6%</div>
<div style="position:absolute;top:345.96px;font-size:16px;line-height:16px;font-weight:400;color:#222;white-space:nowrap;font-family:'Liberation Sans', sans-serif;left:405px;">Sonstige betr. Erträge</div>
<div style="position:absolute;top:346.96px;font-size:16px;line-height:16px;font-weight:400;color:#222;white-space:nowrap;font-family:'Liberation Sans', sans-serif;left:185px;width:600px;text-align:right;">4,9</div>
<div style="position:absolute;top:346.96px;font-size:16px;line-height:16px;font-weight:400;color:#222;white-space:nowrap;font-family:'Liberation Sans', sans-serif;left:273px;width:600px;text-align:right;">5,0</div>
<div style="position:absolute;top:346.96px;font-size:16px;line-height:16px;font-weight:400;color:#222;white-space:nowrap;font-family:'Liberation Sans', sans-serif;left:351.5px;width:600px;text-align:right;">1,7</div>
<div style="position:absolute;top:346.96px;font-size:16px;line-height:16px;font-weight:400;color:#222;white-space:nowrap;font-family:'Liberation Sans', sans-serif;left:429.70000000000005px;width:600px;text-align:right;">3,3</div>
<div style="position:absolute;top:346.96px;font-size:16px;line-height:16px;font-weight:400;color:#222;white-space:nowrap;font-family:'Liberation Sans', sans-serif;left:479.5px;width:600px;text-align:right;">5,0</div>
<div style="position:absolute;top:346.96px;font-size:16px;line-height:16px;font-weight:400;color:#222;white-space:nowrap;font-family:'Liberation Sans', sans-serif;left:798px;width:600px;text-align:right;">5,5</div>
<div style="position:absolute;left:387px;top:367.4px;width:313px;height:2px;background:repeating-linear-gradient(90deg,#b4b4b4 0 1px,#d6d6d6 1px 2px);"></div>
<div style="position:absolute;left:705px;top:367.4px;width:83px;height:2px;background:repeating-linear-gradient(90deg,#a2a2a2 0 1px,transparent 1px 2px);"></div>
<div style="position:absolute;left:793px;top:367.4px;width:83px;height:2px;background:repeating-linear-gradient(90deg,#a2a2a2 0 1px,transparent 1px 2px);"></div>
<div style="position:absolute;left:881px;top:367.4px;width:73.5px;height:2px;background:repeating-linear-gradient(90deg,#a2a2a2 0 1px,transparent 1px 2px);"></div>
<div style="position:absolute;left:959px;top:367.4px;width:73.70000000000005px;height:2px;background:repeating-linear-gradient(90deg,#a2a2a2 0 1px,transparent 1px 2px);"></div>
<div style="position:absolute;left:1037px;top:367.4px;width:45.5px;height:2px;background:repeating-linear-gradient(90deg,#a2a2a2 0 1px,transparent 1px 2px);"></div>
<div style="position:absolute;left:1087px;top:367.4px;width:263.5px;height:2px;background:repeating-linear-gradient(90deg,#a2a2a2 0 1px,transparent 1px 2px);"></div>
<div style="position:absolute;left:1355px;top:367.4px;width:45.700000000000045px;height:2px;background:repeating-linear-gradient(90deg,#a2a2a2 0 1px,transparent 1px 2px);"></div>
<div style="position:absolute;left:1405px;top:367.4px;width:428.70000000000005px;height:2px;background:repeating-linear-gradient(90deg,#a2a2a2 0 1px,transparent 1px 2px);"></div>
<div style="position:absolute;top:374.86px;font-size:16px;line-height:16px;font-weight:400;color:#222;white-space:nowrap;font-family:'Liberation Sans', sans-serif;left:405px;">Materialaufwand</div>
<div style="position:absolute;top:375.86px;font-size:16px;line-height:16px;font-weight:400;color:#222;white-space:nowrap;font-family:'Liberation Sans', sans-serif;left:185px;width:600px;text-align:right;">31,3</div>
<div style="position:absolute;top:375.86px;font-size:16px;line-height:16px;font-weight:400;color:#222;white-space:nowrap;font-family:'Liberation Sans', sans-serif;left:273px;width:600px;text-align:right;">32,2</div>
<div style="position:absolute;top:375.86px;font-size:16px;line-height:16px;font-weight:400;color:#222;white-space:nowrap;font-family:'Liberation Sans', sans-serif;left:351.5px;width:600px;text-align:right;">17,4</div>
<div style="position:absolute;top:375.86px;font-size:16px;line-height:16px;font-weight:400;color:#222;white-space:nowrap;font-family:'Liberation Sans', sans-serif;left:429.70000000000005px;width:600px;text-align:right;">15,6</div>
<div style="position:absolute;top:375.86px;font-size:16px;line-height:16px;font-weight:400;color:#222;white-space:nowrap;font-family:'Liberation Sans', sans-serif;left:479.5px;width:600px;text-align:right;">33,0</div>
<div style="position:absolute;top:375.86px;font-size:16px;line-height:16px;font-weight:400;color:#222;white-space:nowrap;font-family:'Liberation Sans', sans-serif;left:798px;width:600px;text-align:right;">36,3</div>
<div style="position:absolute;left:387px;top:396.0px;width:313px;height:2px;background:#5a5a5a;"></div>
<div style="position:absolute;left:705px;top:396.0px;width:83px;height:2px;background:#5a5a5a;"></div>
<div style="position:absolute;left:793px;top:396.0px;width:83px;height:2px;background:#5a5a5a;"></div>
<div style="position:absolute;left:881px;top:396.0px;width:73.5px;height:2px;background:#5a5a5a;"></div>
<div style="position:absolute;left:959px;top:396.0px;width:73.70000000000005px;height:2px;background:#5a5a5a;"></div>
<div style="position:absolute;left:1037px;top:396.0px;width:45.5px;height:2px;background:#5a5a5a;"></div>
<div style="position:absolute;left:1087px;top:396.0px;width:263.5px;height:2px;background:#5a5a5a;"></div>
<div style="position:absolute;left:1355px;top:396.0px;width:45.700000000000045px;height:2px;background:#5a5a5a;"></div>
<div style="position:absolute;left:1405px;top:396.0px;width:428.70000000000005px;height:2px;background:#5a5a5a;"></div>
<div style="position:absolute;left:1278.54px;top:377.65px;width:11.5px;height:11.5px;background:#fff;border:2px solid #4e4e4e;box-sizing:border-box;"></div>
<div style="position:absolute;left:1281.3px;top:380.4px;width:3.490000000000009px;height:6px;background:#ff0000;"></div>
<div style="position:absolute;top:374.86px;font-size:16px;line-height:16px;font-weight:400;color:#222;white-space:nowrap;font-family:'Liberation Sans', sans-serif;left:1294.04px;">+2%</div>
<svg style="position:absolute;left:387px;top:408.0px" width="12" height="8" viewBox="0 0 12 8"><path d="M0.5 7 L5.7 1.5 L10.9 7" fill="none" stroke="#444" stroke-width="1.1"/></svg>
<div style="position:absolute;top:403.46px;font-size:16px;line-height:16px;font-weight:700;color:#222;white-space:nowrap;font-family:'Liberation Sans', sans-serif;left:405px;">Rohergebnis</div>
<div style="position:absolute;top:404.46px;font-size:16px;line-height:16px;font-weight:700;color:#222;white-space:nowrap;font-family:'Liberation Sans', sans-serif;left:185px;width:600px;text-align:right;">33,0</div>
<div style="position:absolute;top:404.46px;font-size:16px;line-height:16px;font-weight:700;color:#222;white-space:nowrap;font-family:'Liberation Sans', sans-serif;left:273px;width:600px;text-align:right;">33,9</div>
<div style="position:absolute;top:404.46px;font-size:16px;line-height:16px;font-weight:700;color:#222;white-space:nowrap;font-family:'Liberation Sans', sans-serif;left:351.5px;width:600px;text-align:right;">19,6</div>
<div style="position:absolute;top:404.46px;font-size:16px;line-height:16px;font-weight:700;color:#222;white-space:nowrap;font-family:'Liberation Sans', sans-serif;left:429.70000000000005px;width:600px;text-align:right;">17,2</div>
<div style="position:absolute;top:404.46px;font-size:16px;line-height:16px;font-weight:700;color:#222;white-space:nowrap;font-family:'Liberation Sans', sans-serif;left:479.5px;width:600px;text-align:right;">36,8</div>
<div style="position:absolute;top:404.46px;font-size:16px;line-height:16px;font-weight:700;color:#222;white-space:nowrap;font-family:'Liberation Sans', sans-serif;left:798px;width:600px;text-align:right;">40,5</div>
<div style="position:absolute;left:1287.955px;top:406.25px;width:11.5px;height:11.5px;background:#fff;border:2px solid #4e4e4e;box-sizing:border-box;"></div>
<div style="position:absolute;left:1281.6px;top:409.0px;width:12.105000000000018px;height:6px;background:#8cb400;"></div>
<div style="position:absolute;top:403.46px;font-size:16px;line-height:16px;font-weight:700;color:#222;white-space:nowrap;font-family:'Liberation Sans', sans-serif;left:1303.455px;">+9%</div>
<div style="position:absolute;top:437.26px;font-size:16px;line-height:16px;font-weight:400;color:#222;white-space:nowrap;font-family:'Liberation Sans', sans-serif;left:405px;">Löhne und Gehälter</div>
<div style="position:absolute;top:438.26px;font-size:16px;line-height:16px;font-weight:400;color:#222;white-space:nowrap;font-family:'Liberation Sans', sans-serif;left:185px;width:600px;text-align:right;">8,8</div>
<div style="position:absolute;top:438.26px;font-size:16px;line-height:16px;font-weight:400;color:#222;white-space:nowrap;font-family:'Liberation Sans', sans-serif;left:273px;width:600px;text-align:right;">9,0</div>
<div style="position:absolute;top:438.26px;font-size:16px;line-height:16px;font-weight:400;color:#222;white-space:nowrap;font-family:'Liberation Sans', sans-serif;left:351.5px;width:600px;text-align:right;">4,3</div>
<div style="position:absolute;top:438.26px;font-size:16px;line-height:16px;font-weight:400;color:#222;white-space:nowrap;font-family:'Liberation Sans', sans-serif;left:429.70000000000005px;width:600px;text-align:right;">5,2</div>
<div style="position:absolute;top:438.26px;font-size:16px;line-height:16px;font-weight:400;color:#222;white-space:nowrap;font-family:'Liberation Sans', sans-serif;left:479.5px;width:600px;text-align:right;">9,5</div>
<div style="position:absolute;top:438.26px;font-size:16px;line-height:16px;font-weight:400;color:#222;white-space:nowrap;font-family:'Liberation Sans', sans-serif;left:798px;width:600px;text-align:right;">10,4</div>
<div style="position:absolute;left:387px;top:458.6px;width:313px;height:2px;background:repeating-linear-gradient(90deg,#b4b4b4 0 1px,#d6d6d6 1px 2px);"></div>
<div style="position:absolute;left:705px;top:458.6px;width:83px;height:2px;background:repeating-linear-gradient(90deg,#a2a2a2 0 1px,transparent 1px 2px);"></div>
<div style="position:absolute;left:793px;top:458.6px;width:83px;height:2px;background:repeating-linear-gradient(90deg,#a2a2a2 0 1px,transparent 1px 2px);"></div>
<div style="position:absolute;left:881px;top:458.6px;width:73.5px;height:2px;background:repeating-linear-gradient(90deg,#a2a2a2 0 1px,transparent 1px 2px);"></div>
<div style="position:absolute;left:959px;top:458.6px;width:73.70000000000005px;height:2px;background:repeating-linear-gradient(90deg,#a2a2a2 0 1px,transparent 1px 2px);"></div>
<div style="position:absolute;left:1037px;top:458.6px;width:45.5px;height:2px;background:repeating-linear-gradient(90deg,#a2a2a2 0 1px,transparent 1px 2px);"></div>
<div style="position:absolute;left:1087px;top:458.6px;width:263.5px;height:2px;background:repeating-linear-gradient(90deg,#a2a2a2 0 1px,transparent 1px 2px);"></div>
<div style="position:absolute;left:1355px;top:458.6px;width:45.700000000000045px;height:2px;background:repeating-linear-gradient(90deg,#a2a2a2 0 1px,transparent 1px 2px);"></div>
<div style="position:absolute;left:1405px;top:458.6px;width:428.70000000000005px;height:2px;background:repeating-linear-gradient(90deg,#a2a2a2 0 1px,transparent 1px 2px);"></div>
<div style="position:absolute;left:1282.5749999999998px;top:440.05px;width:11.5px;height:11.5px;background:#fff;border:2px solid #4e4e4e;box-sizing:border-box;"></div>
<div style="position:absolute;left:1281.6px;top:442.8px;width:6.724999999999909px;height:6px;background:#ff0000;"></div>
<div style="position:absolute;top:437.26px;font-size:16px;line-height:16px;font-weight:400;color:#222;white-space:nowrap;font-family:'Liberation Sans', sans-serif;left:1298.0749999999998px;">+5%</div>
<div style="position:absolute;top:466.06px;font-size:16px;line-height:16px;font-weight:400;color:#222;white-space:nowrap;font-family:'Liberation Sans', sans-serif;left:405px;">Sozialabgaben</div>
<div style="position:absolute;top:467.06px;font-size:16px;line-height:16px;font-weight:400;color:#222;white-space:nowrap;font-family:'Liberation Sans', sans-serif;left:185px;width:600px;text-align:right;">4,0</div>
<div style="position:absolute;top:467.06px;font-size:16px;line-height:16px;font-weight:400;color:#222;white-space:nowrap;font-family:'Liberation Sans', sans-serif;left:273px;width:600px;text-align:right;">4,1</div>
<div style="position:absolute;top:467.06px;font-size:16px;line-height:16px;font-weight:400;color:#222;white-space:nowrap;font-family:'Liberation Sans', sans-serif;left:351.5px;width:600px;text-align:right;">2,2</div>
<div style="position:absolute;top:467.06px;font-size:16px;line-height:16px;font-weight:400;color:#222;white-space:nowrap;font-family:'Liberation Sans', sans-serif;left:429.70000000000005px;width:600px;text-align:right;">2,1</div>
<div style="position:absolute;top:467.06px;font-size:16px;line-height:16px;font-weight:400;color:#222;white-space:nowrap;font-family:'Liberation Sans', sans-serif;left:479.5px;width:600px;text-align:right;">4,3</div>
<div style="position:absolute;top:467.06px;font-size:16px;line-height:16px;font-weight:400;color:#222;white-space:nowrap;font-family:'Liberation Sans', sans-serif;left:798px;width:600px;text-align:right;">4,7</div>
<div style="position:absolute;left:387px;top:487.3px;width:313px;height:2px;background:#5a5a5a;"></div>
<div style="position:absolute;left:705px;top:487.3px;width:83px;height:2px;background:#5a5a5a;"></div>
<div style="position:absolute;left:793px;top:487.3px;width:83px;height:2px;background:#5a5a5a;"></div>
<div style="position:absolute;left:881px;top:487.3px;width:73.5px;height:2px;background:#5a5a5a;"></div>
<div style="position:absolute;left:959px;top:487.3px;width:73.70000000000005px;height:2px;background:#5a5a5a;"></div>
<div style="position:absolute;left:1037px;top:487.3px;width:45.5px;height:2px;background:#5a5a5a;"></div>
<div style="position:absolute;left:1087px;top:487.3px;width:263.5px;height:2px;background:#5a5a5a;"></div>
<div style="position:absolute;left:1355px;top:487.3px;width:45.700000000000045px;height:2px;background:#5a5a5a;"></div>
<div style="position:absolute;left:1405px;top:487.3px;width:428.70000000000005px;height:2px;background:#5a5a5a;"></div>
<div style="position:absolute;left:1282.5749999999998px;top:468.85px;width:11.5px;height:11.5px;background:#fff;border:2px solid #4e4e4e;box-sizing:border-box;"></div>
<div style="position:absolute;left:1281.6px;top:471.6px;width:6.724999999999909px;height:6px;background:#ff0000;"></div>
<div style="position:absolute;top:466.06px;font-size:16px;line-height:16px;font-weight:400;color:#222;white-space:nowrap;font-family:'Liberation Sans', sans-serif;left:1298.0749999999998px;">+5%</div>
<svg style="position:absolute;left:387px;top:499.3px" width="12" height="8" viewBox="0 0 12 8"><path d="M0.5 7 L5.7 1.5 L10.9 7" fill="none" stroke="#444" stroke-width="1.1"/></svg>
<div style="position:absolute;top:494.76px;font-size:16px;line-height:16px;font-weight:700;color:#222;white-space:nowrap;font-family:'Liberation Sans', sans-serif;left:405px;">Personalaufwand</div>
<div style="position:absolute;top:495.76px;font-size:16px;line-height:16px;font-weight:700;color:#222;white-space:nowrap;font-family:'Liberation Sans', sans-serif;left:185px;width:600px;text-align:right;">12,8</div>
<div style="position:absolute;top:495.76px;font-size:16px;line-height:16px;font-weight:700;color:#222;white-space:nowrap;font-family:'Liberation Sans', sans-serif;left:273px;width:600px;text-align:right;">13,1</div>
<div style="position:absolute;top:495.76px;font-size:16px;line-height:16px;font-weight:700;color:#222;white-space:nowrap;font-family:'Liberation Sans', sans-serif;left:351.5px;width:600px;text-align:right;">6,5</div>
<div style="position:absolute;top:495.76px;font-size:16px;line-height:16px;font-weight:700;color:#222;white-space:nowrap;font-family:'Liberation Sans', sans-serif;left:429.70000000000005px;width:600px;text-align:right;">7,3</div>
<div style="position:absolute;top:495.76px;font-size:16px;line-height:16px;font-weight:700;color:#222;white-space:nowrap;font-family:'Liberation Sans', sans-serif;left:479.5px;width:600px;text-align:right;">13,8</div>
<div style="position:absolute;top:495.76px;font-size:16px;line-height:16px;font-weight:700;color:#222;white-space:nowrap;font-family:'Liberation Sans', sans-serif;left:798px;width:600px;text-align:right;">15,2</div>
<div style="position:absolute;left:1282.5749999999998px;top:497.55px;width:11.5px;height:11.5px;background:#fff;border:2px solid #4e4e4e;box-sizing:border-box;"></div>
<div style="position:absolute;left:1281.6px;top:500.3px;width:6.724999999999909px;height:6px;background:#ff0000;"></div>
<div style="position:absolute;top:494.76px;font-size:16px;line-height:16px;font-weight:700;color:#222;white-space:nowrap;font-family:'Liberation Sans', sans-serif;left:1298.0749999999998px;">+5%</div>
<div style="position:absolute;top:528.06px;font-size:16px;line-height:16px;font-weight:400;color:#222;white-space:nowrap;font-family:'Liberation Sans', sans-serif;left:405px;">Sonstige betr. Aufwendungen</div>
<div style="position:absolute;top:529.06px;font-size:16px;line-height:16px;font-weight:400;color:#222;white-space:nowrap;font-family:'Liberation Sans', sans-serif;left:185px;width:600px;text-align:right;">17,5</div>
<div style="position:absolute;top:529.06px;font-size:16px;line-height:16px;font-weight:400;color:#222;white-space:nowrap;font-family:'Liberation Sans', sans-serif;left:273px;width:600px;text-align:right;">18,0</div>
<div style="position:absolute;top:529.06px;font-size:16px;line-height:16px;font-weight:400;color:#222;white-space:nowrap;font-family:'Liberation Sans', sans-serif;left:351.5px;width:600px;text-align:right;">11,7</div>
<div style="position:absolute;top:529.06px;font-size:16px;line-height:16px;font-weight:400;color:#222;white-space:nowrap;font-family:'Liberation Sans', sans-serif;left:429.70000000000005px;width:600px;text-align:right;">8,3</div>
<div style="position:absolute;top:529.06px;font-size:16px;line-height:16px;font-weight:400;color:#222;white-space:nowrap;font-family:'Liberation Sans', sans-serif;left:479.5px;width:600px;text-align:right;">20,0</div>
<div style="position:absolute;top:529.06px;font-size:16px;line-height:16px;font-weight:400;color:#222;white-space:nowrap;font-family:'Liberation Sans', sans-serif;left:798px;width:600px;text-align:right;">22,0</div>
<div style="position:absolute;left:387px;top:549.4px;width:313px;height:2px;background:#5a5a5a;"></div>
<div style="position:absolute;left:705px;top:549.4px;width:83px;height:2px;background:#5a5a5a;"></div>
<div style="position:absolute;left:793px;top:549.4px;width:83px;height:2px;background:#5a5a5a;"></div>
<div style="position:absolute;left:881px;top:549.4px;width:73.5px;height:2px;background:#5a5a5a;"></div>
<div style="position:absolute;left:959px;top:549.4px;width:73.70000000000005px;height:2px;background:#5a5a5a;"></div>
<div style="position:absolute;left:1037px;top:549.4px;width:45.5px;height:2px;background:#5a5a5a;"></div>
<div style="position:absolute;left:1087px;top:549.4px;width:263.5px;height:2px;background:#5a5a5a;"></div>
<div style="position:absolute;left:1355px;top:549.4px;width:45.700000000000045px;height:2px;background:#5a5a5a;"></div>
<div style="position:absolute;left:1405px;top:549.4px;width:428.70000000000005px;height:2px;background:#5a5a5a;"></div>
<div style="position:absolute;left:1290.645px;top:530.85px;width:11.5px;height:11.5px;background:#fff;border:2px solid #4e4e4e;box-sizing:border-box;"></div>
<div style="position:absolute;left:1281.6px;top:533.6px;width:14.795000000000073px;height:6px;background:#ff0000;"></div>
<div style="position:absolute;top:528.06px;font-size:16px;line-height:16px;font-weight:400;color:#222;white-space:nowrap;font-family:'Liberation Sans', sans-serif;left:1306.145px;">+11%</div>
<svg style="position:absolute;left:387px;top:561.4px" width="12" height="8" viewBox="0 0 12 8"><path d="M0.5 7 L5.7 1.5 L10.9 7" fill="none" stroke="#444" stroke-width="1.1"/></svg>
<div style="position:absolute;top:556.86px;font-size:16px;line-height:16px;font-weight:700;color:#222;white-space:nowrap;font-family:'Liberation Sans', sans-serif;left:405px;">EBITDA</div>
<div style="position:absolute;top:557.86px;font-size:16px;line-height:16px;font-weight:700;color:#222;white-space:nowrap;font-family:'Liberation Sans', sans-serif;left:185px;width:600px;text-align:right;">2,7</div>
<div style="position:absolute;top:557.86px;font-size:16px;line-height:16px;font-weight:700;color:#222;white-space:nowrap;font-family:'Liberation Sans', sans-serif;left:273px;width:600px;text-align:right;">2,8</div>
<div style="position:absolute;top:557.86px;font-size:16px;line-height:16px;font-weight:700;color:#222;white-space:nowrap;font-family:'Liberation Sans', sans-serif;left:351.5px;width:600px;text-align:right;">1,4</div>
<div style="position:absolute;top:557.86px;font-size:16px;line-height:16px;font-weight:700;color:#222;white-space:nowrap;font-family:'Liberation Sans', sans-serif;left:429.70000000000005px;width:600px;text-align:right;">1,6</div>
<div style="position:absolute;top:557.86px;font-size:16px;line-height:16px;font-weight:700;color:#222;white-space:nowrap;font-family:'Liberation Sans', sans-serif;left:479.5px;width:600px;text-align:right;">3,1</div>
<div style="position:absolute;top:557.86px;font-size:16px;line-height:16px;font-weight:700;color:#222;white-space:nowrap;font-family:'Liberation Sans', sans-serif;left:798px;width:600px;text-align:right;">3,4</div>
<div style="position:absolute;left:1290.645px;top:559.65px;width:11.5px;height:11.5px;background:#fff;border:2px solid #4e4e4e;box-sizing:border-box;"></div>
<div style="position:absolute;left:1281.6px;top:562.4px;width:14.795000000000073px;height:6px;background:#8cb400;"></div>
<div style="position:absolute;top:556.86px;font-size:16px;line-height:16px;font-weight:700;color:#222;white-space:nowrap;font-family:'Liberation Sans', sans-serif;left:1306.145px;">+11%</div>
<div style="position:absolute;left:705px;top:611.6px;width:83px;height:2px;background:repeating-linear-gradient(90deg,#a2a2a2 0 1px,transparent 1px 2px);"></div>
<div style="position:absolute;left:793px;top:611.6px;width:83px;height:2px;background:repeating-linear-gradient(90deg,#a2a2a2 0 1px,transparent 1px 2px);"></div>
<div style="position:absolute;left:881px;top:611.6px;width:73.5px;height:2px;background:repeating-linear-gradient(90deg,#a2a2a2 0 1px,transparent 1px 2px);"></div>
<div style="position:absolute;left:959px;top:611.6px;width:73.70000000000005px;height:2px;background:repeating-linear-gradient(90deg,#a2a2a2 0 1px,transparent 1px 2px);"></div>
<div style="position:absolute;left:1037px;top:611.6px;width:45.5px;height:2px;background:repeating-linear-gradient(90deg,#a2a2a2 0 1px,transparent 1px 2px);"></div>
<div style="position:absolute;left:1087px;top:611.6px;width:263.5px;height:2px;background:repeating-linear-gradient(90deg,#a2a2a2 0 1px,transparent 1px 2px);"></div>
<div style="position:absolute;left:1355px;top:611.6px;width:45.700000000000045px;height:2px;background:repeating-linear-gradient(90deg,#a2a2a2 0 1px,transparent 1px 2px);"></div>
<div style="position:absolute;left:1405px;top:611.6px;width:428.70000000000005px;height:2px;background:repeating-linear-gradient(90deg,#a2a2a2 0 1px,transparent 1px 2px);"></div>
<div style="position:absolute;top:619.06px;font-size:16px;line-height:16px;font-weight:400;color:#222;white-space:nowrap;font-family:'Liberation Sans', sans-serif;left:405px;">Periodenergebnis</div>
<div style="position:absolute;top:620.06px;font-size:16px;line-height:16px;font-weight:400;color:#222;white-space:nowrap;font-family:'Liberation Sans', sans-serif;left:185px;width:600px;text-align:right;">2,7</div>
<div style="position:absolute;top:620.06px;font-size:16px;line-height:16px;font-weight:400;color:#222;white-space:nowrap;font-family:'Liberation Sans', sans-serif;left:273px;width:600px;text-align:right;">2,8</div>
<div style="position:absolute;top:620.06px;font-size:16px;line-height:16px;font-weight:400;color:#222;white-space:nowrap;font-family:'Liberation Sans', sans-serif;left:351.5px;width:600px;text-align:right;">1,4</div>
<div style="position:absolute;top:620.06px;font-size:16px;line-height:16px;font-weight:400;color:#222;white-space:nowrap;font-family:'Liberation Sans', sans-serif;left:429.70000000000005px;width:600px;text-align:right;">1,6</div>
<div style="position:absolute;top:620.06px;font-size:16px;line-height:16px;font-weight:400;color:#222;white-space:nowrap;font-family:'Liberation Sans', sans-serif;left:479.5px;width:600px;text-align:right;">3,1</div>
<div style="position:absolute;top:620.06px;font-size:16px;line-height:16px;font-weight:400;color:#222;white-space:nowrap;font-family:'Liberation Sans', sans-serif;left:798px;width:600px;text-align:right;">3,4</div>
<div style="position:absolute;left:387px;top:640.5px;width:313px;height:2px;background:repeating-linear-gradient(90deg,#b4b4b4 0 1px,#d6d6d6 1px 2px);"></div>
<div style="position:absolute;left:705px;top:640.5px;width:83px;height:2px;background:repeating-linear-gradient(90deg,#a2a2a2 0 1px,transparent 1px 2px);"></div>
<div style="position:absolute;left:793px;top:640.5px;width:83px;height:2px;background:repeating-linear-gradient(90deg,#a2a2a2 0 1px,transparent 1px 2px);"></div>
<div style="position:absolute;left:881px;top:640.5px;width:73.5px;height:2px;background:repeating-linear-gradient(90deg,#a2a2a2 0 1px,transparent 1px 2px);"></div>
<div style="position:absolute;left:959px;top:640.5px;width:73.70000000000005px;height:2px;background:repeating-linear-gradient(90deg,#a2a2a2 0 1px,transparent 1px 2px);"></div>
<div style="position:absolute;left:1037px;top:640.5px;width:45.5px;height:2px;background:repeating-linear-gradient(90deg,#a2a2a2 0 1px,transparent 1px 2px);"></div>
<div style="position:absolute;left:1087px;top:640.5px;width:263.5px;height:2px;background:repeating-linear-gradient(90deg,#a2a2a2 0 1px,transparent 1px 2px);"></div>
<div style="position:absolute;left:1355px;top:640.5px;width:45.700000000000045px;height:2px;background:repeating-linear-gradient(90deg,#a2a2a2 0 1px,transparent 1px 2px);"></div>
<div style="position:absolute;left:1405px;top:640.5px;width:428.70000000000005px;height:2px;background:repeating-linear-gradient(90deg,#a2a2a2 0 1px,transparent 1px 2px);"></div>
<div style="position:absolute;left:1289.3px;top:621.85px;width:11.5px;height:11.5px;background:#fff;border:2px solid #4e4e4e;box-sizing:border-box;"></div>
<div style="position:absolute;left:1281.6px;top:624.6px;width:13.450000000000045px;height:6px;background:#8cb400;"></div>
<div style="position:absolute;top:619.06px;font-size:16px;line-height:16px;font-weight:400;color:#222;white-space:nowrap;font-family:'Liberation Sans', sans-serif;left:1304.8px;">+10%</div>
<div style="position:absolute;top:647.96px;font-size:16px;line-height:16px;font-weight:400;color:#222;white-space:nowrap;font-family:'Liberation Sans', sans-serif;left:405px;">+/- Abschreibungen</div>
<div style="position:absolute;top:648.96px;font-size:16px;line-height:16px;font-weight:400;color:#222;white-space:nowrap;font-family:'Liberation Sans', sans-serif;left:185px;width:600px;text-align:right;">2,8</div>
<div style="position:absolute;top:648.96px;font-size:16px;line-height:16px;font-weight:400;color:#222;white-space:nowrap;font-family:'Liberation Sans', sans-serif;left:273px;width:600px;text-align:right;">2,8</div>
<div style="position:absolute;top:648.96px;font-size:16px;line-height:16px;font-weight:400;color:#222;white-space:nowrap;font-family:'Liberation Sans', sans-serif;left:351.5px;width:600px;text-align:right;">0,0</div>
<div style="position:absolute;top:648.96px;font-size:16px;line-height:16px;font-weight:400;color:#222;white-space:nowrap;font-family:'Liberation Sans', sans-serif;left:429.70000000000005px;width:600px;text-align:right;">0,0</div>
<div style="position:absolute;top:648.96px;font-size:16px;line-height:16px;font-weight:400;color:#222;white-space:nowrap;font-family:'Liberation Sans', sans-serif;left:479.5px;width:600px;text-align:right;">0,0</div>
<div style="position:absolute;top:648.96px;font-size:16px;line-height:16px;font-weight:400;color:#222;white-space:nowrap;font-family:'Liberation Sans', sans-serif;left:798px;width:600px;text-align:right;">0,0</div>
<div style="position:absolute;left:387px;top:669.5px;width:313px;height:2px;background:repeating-linear-gradient(90deg,#b4b4b4 0 1px,#d6d6d6 1px 2px);"></div>
<div style="position:absolute;left:705px;top:669.5px;width:83px;height:2px;background:repeating-linear-gradient(90deg,#a2a2a2 0 1px,transparent 1px 2px);"></div>
<div style="position:absolute;left:793px;top:669.5px;width:83px;height:2px;background:repeating-linear-gradient(90deg,#a2a2a2 0 1px,transparent 1px 2px);"></div>
<div style="position:absolute;left:881px;top:669.5px;width:73.5px;height:2px;background:repeating-linear-gradient(90deg,#a2a2a2 0 1px,transparent 1px 2px);"></div>
<div style="position:absolute;left:959px;top:669.5px;width:73.70000000000005px;height:2px;background:repeating-linear-gradient(90deg,#a2a2a2 0 1px,transparent 1px 2px);"></div>
<div style="position:absolute;left:1037px;top:669.5px;width:45.5px;height:2px;background:repeating-linear-gradient(90deg,#a2a2a2 0 1px,transparent 1px 2px);"></div>
<div style="position:absolute;left:1087px;top:669.5px;width:263.5px;height:2px;background:repeating-linear-gradient(90deg,#a2a2a2 0 1px,transparent 1px 2px);"></div>
<div style="position:absolute;left:1355px;top:669.5px;width:45.700000000000045px;height:2px;background:repeating-linear-gradient(90deg,#a2a2a2 0 1px,transparent 1px 2px);"></div>
<div style="position:absolute;left:1405px;top:669.5px;width:428.70000000000005px;height:2px;background:repeating-linear-gradient(90deg,#a2a2a2 0 1px,transparent 1px 2px);"></div>
<div style="position:absolute;left:1141.35px;top:650.75px;width:11.5px;height:11.5px;background:#fff;border:2px solid #4e4e4e;box-sizing:border-box;"></div>
<div style="position:absolute;left:1147.1px;top:653.5px;width:134.5px;height:6px;background:#ff0000;"></div>
<div style="position:absolute;top:647.96px;font-size:16px;line-height:16px;font-weight:400;color:#222;white-space:nowrap;font-family:'Liberation Sans', sans-serif;left:536.3499999999999px;width:600px;text-align:right;">-100%</div>
<div style="position:absolute;top:676.96px;font-size:16px;line-height:16px;font-weight:400;color:#222;white-space:nowrap;font-family:'Liberation Sans', sans-serif;left:405px;">+/- Rückstellungen</div>
<div style="position:absolute;top:677.96px;font-size:16px;line-height:16px;font-weight:400;color:#222;white-space:nowrap;font-family:'Liberation Sans', sans-serif;left:185px;width:600px;text-align:right;">0,9</div>
<div style="position:absolute;top:677.96px;font-size:16px;line-height:16px;font-weight:400;color:#222;white-space:nowrap;font-family:'Liberation Sans', sans-serif;left:273px;width:600px;text-align:right;">1,0</div>
<div style="position:absolute;left:387px;top:698.2px;width:313px;height:2px;background:repeating-linear-gradient(90deg,#b4b4b4 0 1px,#d6d6d6 1px 2px);"></div>
<div style="position:absolute;left:705px;top:698.2px;width:83px;height:2px;background:repeating-linear-gradient(90deg,#a2a2a2 0 1px,transparent 1px 2px);"></div>
<div style="position:absolute;left:793px;top:698.2px;width:83px;height:2px;background:repeating-linear-gradient(90deg,#a2a2a2 0 1px,transparent 1px 2px);"></div>
<div style="position:absolute;left:881px;top:698.2px;width:73.5px;height:2px;background:repeating-linear-gradient(90deg,#a2a2a2 0 1px,transparent 1px 2px);"></div>
<div style="position:absolute;left:959px;top:698.2px;width:73.70000000000005px;height:2px;background:repeating-linear-gradient(90deg,#a2a2a2 0 1px,transparent 1px 2px);"></div>
<div style="position:absolute;left:1037px;top:698.2px;width:45.5px;height:2px;background:repeating-linear-gradient(90deg,#a2a2a2 0 1px,transparent 1px 2px);"></div>
<div style="position:absolute;left:1087px;top:698.2px;width:263.5px;height:2px;background:repeating-linear-gradient(90deg,#a2a2a2 0 1px,transparent 1px 2px);"></div>
<div style="position:absolute;left:1355px;top:698.2px;width:45.700000000000045px;height:2px;background:repeating-linear-gradient(90deg,#a2a2a2 0 1px,transparent 1px 2px);"></div>
<div style="position:absolute;left:1405px;top:698.2px;width:428.70000000000005px;height:2px;background:repeating-linear-gradient(90deg,#a2a2a2 0 1px,transparent 1px 2px);"></div>
<div style="position:absolute;left:1141.35px;top:679.75px;width:11.5px;height:11.5px;background:#fff;border:2px solid #4e4e4e;box-sizing:border-box;"></div>
<div style="position:absolute;left:1147.1px;top:682.5px;width:134.5px;height:6px;background:#ff0000;"></div>
<div style="position:absolute;top:676.96px;font-size:16px;line-height:16px;font-weight:400;color:#222;white-space:nowrap;font-family:'Liberation Sans', sans-serif;left:536.3499999999999px;width:600px;text-align:right;">-100%</div>
<div style="position:absolute;top:705.66px;font-size:16px;line-height:16px;font-weight:400;color:#222;white-space:nowrap;font-family:'Liberation Sans', sans-serif;left:405px;">-/+ Forderungen und andere Aktiva</div>
<div style="position:absolute;top:706.66px;font-size:16px;line-height:16px;font-weight:400;color:#222;white-space:nowrap;font-family:'Liberation Sans', sans-serif;left:185px;width:600px;text-align:right;">7,9</div>
<div style="position:absolute;top:706.66px;font-size:16px;line-height:16px;font-weight:400;color:#222;white-space:nowrap;font-family:'Liberation Sans', sans-serif;left:273px;width:600px;text-align:right;">8,1</div>
<div style="position:absolute;top:706.66px;font-size:16px;line-height:16px;font-weight:400;color:#222;white-space:nowrap;font-family:'Liberation Sans', sans-serif;left:351.5px;width:600px;text-align:right;">5,7</div>
<div style="position:absolute;top:706.66px;font-size:16px;line-height:16px;font-weight:400;color:#222;white-space:nowrap;font-family:'Liberation Sans', sans-serif;left:429.70000000000005px;width:600px;text-align:right;">-2,0</div>
<div style="position:absolute;top:706.66px;font-size:16px;line-height:16px;font-weight:400;color:#222;white-space:nowrap;font-family:'Liberation Sans', sans-serif;left:479.5px;width:600px;text-align:right;">3,7</div>
<div style="position:absolute;top:706.66px;font-size:16px;line-height:16px;font-weight:400;color:#222;white-space:nowrap;font-family:'Liberation Sans', sans-serif;left:798px;width:600px;text-align:right;">4,1</div>
<div style="position:absolute;left:387px;top:727.1px;width:313px;height:2px;background:repeating-linear-gradient(90deg,#b4b4b4 0 1px,#d6d6d6 1px 2px);"></div>
<div style="position:absolute;left:705px;top:727.1px;width:83px;height:2px;background:repeating-linear-gradient(90deg,#a2a2a2 0 1px,transparent 1px 2px);"></div>
<div style="position:absolute;left:793px;top:727.1px;width:83px;height:2px;background:repeating-linear-gradient(90deg,#a2a2a2 0 1px,transparent 1px 2px);"></div>
<div style="position:absolute;left:881px;top:727.1px;width:73.5px;height:2px;background:repeating-linear-gradient(90deg,#a2a2a2 0 1px,transparent 1px 2px);"></div>
<div style="position:absolute;left:959px;top:727.1px;width:73.70000000000005px;height:2px;background:repeating-linear-gradient(90deg,#a2a2a2 0 1px,transparent 1px 2px);"></div>
<div style="position:absolute;left:1037px;top:727.1px;width:45.5px;height:2px;background:repeating-linear-gradient(90deg,#a2a2a2 0 1px,transparent 1px 2px);"></div>
<div style="position:absolute;left:1087px;top:727.1px;width:263.5px;height:2px;background:repeating-linear-gradient(90deg,#a2a2a2 0 1px,transparent 1px 2px);"></div>
<div style="position:absolute;left:1355px;top:727.1px;width:45.700000000000045px;height:2px;background:repeating-linear-gradient(90deg,#a2a2a2 0 1px,transparent 1px 2px);"></div>
<div style="position:absolute;left:1405px;top:727.1px;width:428.70000000000005px;height:2px;background:repeating-linear-gradient(90deg,#a2a2a2 0 1px,transparent 1px 2px);"></div>
<div style="position:absolute;left:1203.2199999999998px;top:708.45px;width:11.5px;height:11.5px;background:#fff;border:2px solid #4e4e4e;box-sizing:border-box;"></div>
<div style="position:absolute;left:1208.9699999999998px;top:711.2px;width:72.63000000000011px;height:6px;background:#8cb400;"></div>
<div style="position:absolute;top:705.66px;font-size:16px;line-height:16px;font-weight:400;color:#222;white-space:nowrap;font-family:'Liberation Sans', sans-serif;left:598.2199999999998px;width:600px;text-align:right;">-54%</div>
<div style="position:absolute;top:734.56px;font-size:16px;line-height:16px;font-weight:400;color:#222;white-space:nowrap;font-family:'Liberation Sans', sans-serif;left:405px;">+/- Verbindlichkeiten und andere Passiva</div>
<div style="position:absolute;top:735.56px;font-size:16px;line-height:16px;font-weight:400;color:#222;white-space:nowrap;font-family:'Liberation Sans', sans-serif;left:185px;width:600px;text-align:right;">-1,5</div>
<div style="position:absolute;top:735.56px;font-size:16px;line-height:16px;font-weight:400;color:#222;white-space:nowrap;font-family:'Liberation Sans', sans-serif;left:273px;width:600px;text-align:right;">-1,7</div>
<div style="position:absolute;top:735.56px;font-size:16px;line-height:16px;font-weight:400;color:#222;white-space:nowrap;font-family:'Liberation Sans', sans-serif;left:351.5px;width:600px;text-align:right;">5,2</div>
<div style="position:absolute;top:735.56px;font-size:16px;line-height:16px;font-weight:400;color:#222;white-space:nowrap;font-family:'Liberation Sans', sans-serif;left:429.70000000000005px;width:600px;text-align:right;">-0,5</div>
<div style="position:absolute;top:735.56px;font-size:16px;line-height:16px;font-weight:400;color:#222;white-space:nowrap;font-family:'Liberation Sans', sans-serif;left:479.5px;width:600px;text-align:right;">4,7</div>
<div style="position:absolute;top:735.56px;font-size:16px;line-height:16px;font-weight:400;color:#222;white-space:nowrap;font-family:'Liberation Sans', sans-serif;left:798px;width:600px;text-align:right;">5,9</div>
<div style="position:absolute;left:387px;top:756.2px;width:313px;height:2px;background:#5a5a5a;"></div>
<div style="position:absolute;left:705px;top:756.2px;width:83px;height:2px;background:#5a5a5a;"></div>
<div style="position:absolute;left:793px;top:756.2px;width:83px;height:2px;background:#5a5a5a;"></div>
<div style="position:absolute;left:881px;top:756.2px;width:73.5px;height:2px;background:#5a5a5a;"></div>
<div style="position:absolute;left:959px;top:756.2px;width:73.70000000000005px;height:2px;background:#5a5a5a;"></div>
<div style="position:absolute;left:1037px;top:756.2px;width:45.5px;height:2px;background:#5a5a5a;"></div>
<div style="position:absolute;left:1087px;top:756.2px;width:263.5px;height:2px;background:#5a5a5a;"></div>
<div style="position:absolute;left:1355px;top:756.2px;width:45.700000000000045px;height:2px;background:#5a5a5a;"></div>
<div style="position:absolute;left:1405px;top:756.2px;width:428.70000000000005px;height:2px;background:#5a5a5a;"></div>
<div style="position:absolute;top:734.56px;font-size:16px;line-height:16px;font-weight:400;color:#222;white-space:nowrap;font-family:'Liberation Sans', sans-serif;left:726.4000000000001px;width:600px;text-align:right;">+383%</div>
<svg style="position:absolute;left:1330px;top:737.6px" width="15" height="11"><path d="M0 0 L15 5.5 L0 11 Z" fill="#8cb400"/></svg>
<svg style="position:absolute;left:387px;top:768.2px" width="12" height="8" viewBox="0 0 12 8"><path d="M0.5 7 L5.7 1.5 L10.9 7" fill="none" stroke="#444" stroke-width="1.1"/></svg>
<div style="position:absolute;top:763.66px;font-size:16px;line-height:16px;font-weight:700;color:#222;white-space:nowrap;font-family:'Liberation Sans', sans-serif;left:405px;">CF aus Geschäftstätigkeit</div>
<div style="position:absolute;top:764.66px;font-size:16px;line-height:16px;font-weight:700;color:#222;white-space:nowrap;font-family:'Liberation Sans', sans-serif;left:185px;width:600px;text-align:right;">-3,1</div>
<div style="position:absolute;top:764.66px;font-size:16px;line-height:16px;font-weight:700;color:#222;white-space:nowrap;font-family:'Liberation Sans', sans-serif;left:273px;width:600px;text-align:right;">-3,2</div>
<div style="position:absolute;top:764.66px;font-size:16px;line-height:16px;font-weight:700;color:#222;white-space:nowrap;font-family:'Liberation Sans', sans-serif;left:351.5px;width:600px;text-align:right;">0,9</div>
<div style="position:absolute;top:764.66px;font-size:16px;line-height:16px;font-weight:700;color:#222;white-space:nowrap;font-family:'Liberation Sans', sans-serif;left:429.70000000000005px;width:600px;text-align:right;">3,1</div>
<div style="position:absolute;top:764.66px;font-size:16px;line-height:16px;font-weight:700;color:#222;white-space:nowrap;font-family:'Liberation Sans', sans-serif;left:479.5px;width:600px;text-align:right;">4,0</div>
<div style="position:absolute;top:764.66px;font-size:16px;line-height:16px;font-weight:700;color:#222;white-space:nowrap;font-family:'Liberation Sans', sans-serif;left:798px;width:600px;text-align:right;">5,2</div>
<div style="position:absolute;top:763.66px;font-size:16px;line-height:16px;font-weight:700;color:#222;white-space:nowrap;font-family:'Liberation Sans', sans-serif;left:726.4000000000001px;width:600px;text-align:right;">+227%</div>
<svg style="position:absolute;left:1330px;top:766.7px" width="15" height="11"><path d="M0 0 L15 5.5 L0 11 Z" fill="#8cb400"/></svg>
<div style="position:absolute;left:705px;top:818.0px;width:83px;height:2px;background:repeating-linear-gradient(90deg,#a2a2a2 0 1px,transparent 1px 2px);"></div>
<div style="position:absolute;left:793px;top:818.0px;width:83px;height:2px;background:repeating-linear-gradient(90deg,#a2a2a2 0 1px,transparent 1px 2px);"></div>
<div style="position:absolute;left:881px;top:818.0px;width:73.5px;height:2px;background:repeating-linear-gradient(90deg,#a2a2a2 0 1px,transparent 1px 2px);"></div>
<div style="position:absolute;left:959px;top:818.0px;width:73.70000000000005px;height:2px;background:repeating-linear-gradient(90deg,#a2a2a2 0 1px,transparent 1px 2px);"></div>
<div style="position:absolute;left:1037px;top:818.0px;width:45.5px;height:2px;background:repeating-linear-gradient(90deg,#a2a2a2 0 1px,transparent 1px 2px);"></div>
<div style="position:absolute;left:1087px;top:818.0px;width:263.5px;height:2px;background:repeating-linear-gradient(90deg,#a2a2a2 0 1px,transparent 1px 2px);"></div>
<div style="position:absolute;left:1355px;top:818.0px;width:45.700000000000045px;height:2px;background:repeating-linear-gradient(90deg,#a2a2a2 0 1px,transparent 1px 2px);"></div>
<div style="position:absolute;left:1405px;top:818.0px;width:428.70000000000005px;height:2px;background:repeating-linear-gradient(90deg,#a2a2a2 0 1px,transparent 1px 2px);"></div>
<div style="position:absolute;top:825.46px;font-size:16px;line-height:16px;font-weight:400;color:#222;white-space:nowrap;font-family:'Liberation Sans', sans-serif;left:405px;">Bilanz</div>
<div style="position:absolute;left:387px;top:846.7px;width:313px;height:2px;background:repeating-linear-gradient(90deg,#b4b4b4 0 1px,#d6d6d6 1px 2px);"></div>
<div style="position:absolute;left:705px;top:846.7px;width:83px;height:2px;background:repeating-linear-gradient(90deg,#a2a2a2 0 1px,transparent 1px 2px);"></div>
<div style="position:absolute;left:793px;top:846.7px;width:83px;height:2px;background:repeating-linear-gradient(90deg,#a2a2a2 0 1px,transparent 1px 2px);"></div>
<div style="position:absolute;left:881px;top:846.7px;width:73.5px;height:2px;background:repeating-linear-gradient(90deg,#a2a2a2 0 1px,transparent 1px 2px);"></div>
<div style="position:absolute;left:959px;top:846.7px;width:73.70000000000005px;height:2px;background:repeating-linear-gradient(90deg,#a2a2a2 0 1px,transparent 1px 2px);"></div>
<div style="position:absolute;left:1037px;top:846.7px;width:45.5px;height:2px;background:repeating-linear-gradient(90deg,#a2a2a2 0 1px,transparent 1px 2px);"></div>
<div style="position:absolute;left:1087px;top:846.7px;width:263.5px;height:2px;background:repeating-linear-gradient(90deg,#a2a2a2 0 1px,transparent 1px 2px);"></div>
<div style="position:absolute;left:1355px;top:846.7px;width:45.700000000000045px;height:2px;background:repeating-linear-gradient(90deg,#a2a2a2 0 1px,transparent 1px 2px);"></div>
<div style="position:absolute;left:1405px;top:846.7px;width:428.70000000000005px;height:2px;background:repeating-linear-gradient(90deg,#a2a2a2 0 1px,transparent 1px 2px);"></div>
<div style="position:absolute;top:854.16px;font-size:16px;line-height:16px;font-weight:400;color:#222;white-space:nowrap;font-family:'Liberation Sans', sans-serif;left:405px;">Aktiva</div>
<div style="position:absolute;top:855.16px;font-size:16px;line-height:16px;font-weight:400;color:#222;white-space:nowrap;font-family:'Liberation Sans', sans-serif;left:185px;width:600px;text-align:right;">145,2</div>
<div style="position:absolute;top:855.16px;font-size:16px;line-height:16px;font-weight:400;color:#222;white-space:nowrap;font-family:'Liberation Sans', sans-serif;left:273px;width:600px;text-align:right;">153,5</div>
<div style="position:absolute;top:855.16px;font-size:16px;line-height:16px;font-weight:400;color:#222;white-space:nowrap;font-family:'Liberation Sans', sans-serif;left:351.5px;width:600px;text-align:right;">159,2</div>
<div style="position:absolute;top:855.16px;font-size:16px;line-height:16px;font-weight:400;color:#222;white-space:nowrap;font-family:'Liberation Sans', sans-serif;left:429.70000000000005px;width:600px;text-align:right;">157,2</div>
<div style="position:absolute;top:855.16px;font-size:16px;line-height:16px;font-weight:400;color:#222;white-space:nowrap;font-family:'Liberation Sans', sans-serif;left:479.5px;width:600px;text-align:right;">157,2</div>
<div style="position:absolute;top:855.16px;font-size:16px;line-height:16px;font-weight:400;color:#222;white-space:nowrap;font-family:'Liberation Sans', sans-serif;left:798px;width:600px;text-align:right;">157,6</div>
<div style="position:absolute;left:387px;top:875.5px;width:313px;height:2px;background:repeating-linear-gradient(90deg,#b4b4b4 0 1px,#d6d6d6 1px 2px);"></div>
<div style="position:absolute;left:705px;top:875.5px;width:83px;height:2px;background:repeating-linear-gradient(90deg,#a2a2a2 0 1px,transparent 1px 2px);"></div>
<div style="position:absolute;left:793px;top:875.5px;width:83px;height:2px;background:repeating-linear-gradient(90deg,#a2a2a2 0 1px,transparent 1px 2px);"></div>
<div style="position:absolute;left:881px;top:875.5px;width:73.5px;height:2px;background:repeating-linear-gradient(90deg,#a2a2a2 0 1px,transparent 1px 2px);"></div>
<div style="position:absolute;left:959px;top:875.5px;width:73.70000000000005px;height:2px;background:repeating-linear-gradient(90deg,#a2a2a2 0 1px,transparent 1px 2px);"></div>
<div style="position:absolute;left:1037px;top:875.5px;width:45.5px;height:2px;background:repeating-linear-gradient(90deg,#a2a2a2 0 1px,transparent 1px 2px);"></div>
<div style="position:absolute;left:1087px;top:875.5px;width:263.5px;height:2px;background:repeating-linear-gradient(90deg,#a2a2a2 0 1px,transparent 1px 2px);"></div>
<div style="position:absolute;left:1355px;top:875.5px;width:45.700000000000045px;height:2px;background:repeating-linear-gradient(90deg,#a2a2a2 0 1px,transparent 1px 2px);"></div>
<div style="position:absolute;left:1405px;top:875.5px;width:428.70000000000005px;height:2px;background:repeating-linear-gradient(90deg,#a2a2a2 0 1px,transparent 1px 2px);"></div>
<div style="position:absolute;left:1278.54px;top:856.95px;width:11.5px;height:11.5px;background:#fff;border:2px solid #4e4e4e;box-sizing:border-box;"></div>
<div style="position:absolute;left:1281.3px;top:859.7px;width:3.490000000000009px;height:6px;background:#8cb400;"></div>
<div style="position:absolute;top:854.16px;font-size:16px;line-height:16px;font-weight:400;color:#222;white-space:nowrap;font-family:'Liberation Sans', sans-serif;left:1294.04px;">+2%</div>
<div style="position:absolute;top:882.96px;font-size:16px;line-height:16px;font-weight:400;color:#222;white-space:nowrap;font-family:'Liberation Sans', sans-serif;left:405px;">Passiva</div>
<div style="position:absolute;top:883.96px;font-size:16px;line-height:16px;font-weight:400;color:#222;white-space:nowrap;font-family:'Liberation Sans', sans-serif;left:185px;width:600px;text-align:right;">145,2</div>
<div style="position:absolute;top:883.96px;font-size:16px;line-height:16px;font-weight:400;color:#222;white-space:nowrap;font-family:'Liberation Sans', sans-serif;left:273px;width:600px;text-align:right;">153,5</div>
<div style="position:absolute;top:883.96px;font-size:16px;line-height:16px;font-weight:400;color:#222;white-space:nowrap;font-family:'Liberation Sans', sans-serif;left:351.5px;width:600px;text-align:right;">159,2</div>
<div style="position:absolute;top:883.96px;font-size:16px;line-height:16px;font-weight:400;color:#222;white-space:nowrap;font-family:'Liberation Sans', sans-serif;left:429.70000000000005px;width:600px;text-align:right;">157,2</div>
<div style="position:absolute;top:883.96px;font-size:16px;line-height:16px;font-weight:400;color:#222;white-space:nowrap;font-family:'Liberation Sans', sans-serif;left:479.5px;width:600px;text-align:right;">157,2</div>
<div style="position:absolute;top:883.96px;font-size:16px;line-height:16px;font-weight:400;color:#222;white-space:nowrap;font-family:'Liberation Sans', sans-serif;left:798px;width:600px;text-align:right;">157,6</div>
<div style="position:absolute;left:1278.54px;top:885.75px;width:11.5px;height:11.5px;background:#fff;border:2px solid #4e4e4e;box-sizing:border-box;"></div>
<div style="position:absolute;left:1281.3px;top:888.5px;width:3.490000000000009px;height:6px;background:#ff0000;"></div>
<div style="position:absolute;top:882.96px;font-size:16px;line-height:16px;font-weight:400;color:#222;white-space:nowrap;font-family:'Liberation Sans', sans-serif;left:1294.04px;">+2%</div>
<div style="position:absolute;left:1461px;top:316.8px;width:310.5px;height:17px;box-sizing:border-box;border:1.3px solid #8cb400;background:repeating-linear-gradient(-45deg,#8cb400 0 2.6px,#fff 2.6px 4.9px);"></div>
<div style="position:absolute;top:317.86px;font-size:16px;line-height:16px;font-weight:400;color:#222;white-space:nowrap;font-family:'Liberation Sans', sans-serif;left:1775.9px;">+6,5</div>
<div style="position:absolute;left:1770px;top:345.5px;width:25px;height:17px;box-sizing:border-box;border:1.3px solid #8cb400;background:repeating-linear-gradient(-45deg,#8cb400 0 2.6px,#fff 2.6px 4.9px);"></div>
<div style="position:absolute;top:346.56px;font-size:16px;line-height:16px;font-weight:400;color:#222;white-space:nowrap;font-family:'Liberation Sans', sans-serif;left:1799.4px;">+0,5</div>
<div style="position:absolute;left:1637px;top:374.4px;width:158px;height:17px;box-sizing:border-box;border:1.3px solid #ff0000;background:repeating-linear-gradient(-45deg,#ff0000 0 2.6px,#fff 2.6px 4.9px);"></div>
<div style="position:absolute;top:375.46px;font-size:16px;line-height:16px;font-weight:400;color:#222;white-space:nowrap;font-family:'Liberation Sans', sans-serif;left:1032.5px;width:600px;text-align:right;">+3,3</div>
<div style="position:absolute;left:1461px;top:403.2px;width:176.5999999999999px;height:17px;box-sizing:border-box;border:1.3px solid #8cb400;background:repeating-linear-gradient(-45deg,#8cb400 0 2.6px,#fff 2.6px 4.9px);"></div>
<div style="position:absolute;top:404.26px;font-size:16px;line-height:16px;font-weight:700;color:#222;white-space:nowrap;font-family:'Liberation Sans', sans-serif;left:1642.0px;">+3,7</div>
<div style="position:absolute;left:1591.8px;top:436.8px;width:46.200000000000045px;height:17px;box-sizing:border-box;border:1.3px solid #ff0000;background:repeating-linear-gradient(-45deg,#ff0000 0 2.6px,#fff 2.6px 4.9px);"></div>
<div style="position:absolute;top:437.86px;font-size:16px;line-height:16px;font-weight:400;color:#222;white-space:nowrap;font-family:'Liberation Sans', sans-serif;left:987.3px;width:600px;text-align:right;">+0,9</div>
<div style="position:absolute;left:1571.4px;top:465.5px;width:21.399999999999864px;height:17px;box-sizing:border-box;border:1.3px solid #ff0000;background:repeating-linear-gradient(-45deg,#ff0000 0 2.6px,#fff 2.6px 4.9px);"></div>
<div style="position:absolute;top:466.56px;font-size:16px;line-height:16px;font-weight:400;color:#222;white-space:nowrap;font-family:'Liberation Sans', sans-serif;left:966.9000000000001px;width:600px;text-align:right;">+0,4</div>
<div style="position:absolute;left:1571.4px;top:494px;width:66.59999999999991px;height:17px;box-sizing:border-box;border:1.3px solid #ff0000;background:repeating-linear-gradient(-45deg,#ff0000 0 2.6px,#fff 2.6px 4.9px);"></div>
<div style="position:absolute;top:495.06px;font-size:16px;line-height:16px;font-weight:700;color:#222;white-space:nowrap;font-family:'Liberation Sans', sans-serif;left:966.9000000000001px;width:600px;text-align:right;">+1,4</div>
<div style="position:absolute;left:1475.9px;top:527.9px;width:96.5px;height:17px;box-sizing:border-box;border:1.3px solid #ff0000;background:repeating-linear-gradient(-45deg,#ff0000 0 2.6px,#fff 2.6px 4.9px);"></div>
<div style="position:absolute;top:528.96px;font-size:16px;line-height:16px;font-weight:400;color:#222;white-space:nowrap;font-family:'Liberation Sans', sans-serif;left:871.4000000000001px;width:600px;text-align:right;">+2,0</div>
<div style="position:absolute;left:1461px;top:556.4px;width:15.599999999999909px;height:17px;box-sizing:border-box;border:1.3px solid #8cb400;background:repeating-linear-gradient(-45deg,#8cb400 0 2.6px,#fff 2.6px 4.9px);"></div>
<div style="position:absolute;top:557.46px;font-size:16px;line-height:16px;font-weight:700;color:#222;white-space:nowrap;font-family:'Liberation Sans', sans-serif;left:1481.0px;">+0,3</div>
<div style="position:absolute;left:1461px;top:618.7px;width:15.799999999999955px;height:17px;box-sizing:border-box;border:1.3px solid #8cb400;background:repeating-linear-gradient(-45deg,#8cb400 0 2.6px,#fff 2.6px 4.9px);"></div>
<div style="position:absolute;top:619.76px;font-size:16px;line-height:16px;font-weight:400;color:#222;white-space:nowrap;font-family:'Liberation Sans', sans-serif;left:1481.2px;">+0,3</div>
<div style="position:absolute;left:1458px;top:705.2px;width:18.799999999999955px;height:17px;box-sizing:border-box;border:1.3px solid #ff0000;background:repeating-linear-gradient(-45deg,#ff0000 0 2.6px,#fff 2.6px 4.9px);"></div>
<div style="position:absolute;top:706.26px;font-size:16px;line-height:16px;font-weight:400;color:#222;white-space:nowrap;font-family:'Liberation Sans', sans-serif;left:853.5px;width:600px;text-align:right;">+0,4</div>
<div style="position:absolute;left:1458px;top:733.9px;width:60.200000000000045px;height:17px;box-sizing:border-box;border:1.3px solid #8cb400;background:repeating-linear-gradient(-45deg,#8cb400 0 2.6px,#fff 2.6px 4.9px);"></div>
<div style="position:absolute;top:734.96px;font-size:16px;line-height:16px;font-weight:400;color:#222;white-space:nowrap;font-family:'Liberation Sans', sans-serif;left:1522.6000000000001px;">+1,2</div>
<div style="position:absolute;left:1461px;top:762.8px;width:57.200000000000045px;height:17px;box-sizing:border-box;border:1.3px solid #8cb400;background:repeating-linear-gradient(-45deg,#8cb400 0 2.6px,#fff 2.6px 4.9px);"></div>
<div style="position:absolute;top:763.86px;font-size:16px;line-height:16px;font-weight:700;color:#222;white-space:nowrap;font-family:'Liberation Sans', sans-serif;left:1522.6000000000001px;">+1,2</div>
<div style="position:absolute;left:1461px;top:853.5px;width:19px;height:17px;box-sizing:border-box;border:1.3px solid #8cb400;background:repeating-linear-gradient(-45deg,#8cb400 0 2.6px,#fff 2.6px 4.9px);"></div>
<div style="position:absolute;top:854.56px;font-size:16px;line-height:16px;font-weight:400;color:#222;white-space:nowrap;font-family:'Liberation Sans', sans-serif;left:1484.4px;">+0,4</div>
<div style="position:absolute;left:1443.2px;top:882.2px;width:19.299999999999955px;height:17px;box-sizing:border-box;border:1.3px solid #ff0000;background:repeating-linear-gradient(-45deg,#ff0000 0 2.6px,#fff 2.6px 4.9px);"></div>
<div style="position:absolute;top:883.26px;font-size:16px;line-height:16px;font-weight:400;color:#222;white-space:nowrap;font-family:'Liberation Sans', sans-serif;left:838.7px;width:600px;text-align:right;">+0,4</div>
<div style="position:absolute;left:1770.25px;top:333.8px;width:1.5px;height:11.699999999999989px;background:#333;"></div>
<div style="position:absolute;left:1793.75px;top:362.5px;width:1.5px;height:11.899999999999977px;background:#333;"></div>
<div style="position:absolute;left:1636.55px;top:391.4px;width:1.5px;height:11.800000000000011px;background:#333;"></div>
<div style="position:absolute;left:1636.55px;top:420.2px;width:1.5px;height:73.80000000000001px;background:#333;"></div>
<div style="position:absolute;left:1591.55px;top:453.8px;width:1.5px;height:11.699999999999989px;background:#333;"></div>
<div style="position:absolute;left:1571.15px;top:482.3px;width:1.5px;height:11.699999999999989px;background:#333;"></div>
<div style="position:absolute;left:1571.15px;top:511px;width:1.5px;height:16.899999999999977px;background:#333;"></div>
<div style="position:absolute;left:1475.55px;top:544.9px;width:1.5px;height:11.5px;background:#333;"></div>
<div style="position:absolute;left:1475.55px;top:635.9px;width:1.5px;height:69.30000000000007px;background:#333;"></div>
<div style="position:absolute;left:1457.85px;top:722.2px;width:1.5px;height:11.699999999999932px;background:#333;"></div>
<div style="position:absolute;left:1516.85px;top:751px;width:1.5px;height:11.799999999999955px;background:#333;"></div>
</body></html>
